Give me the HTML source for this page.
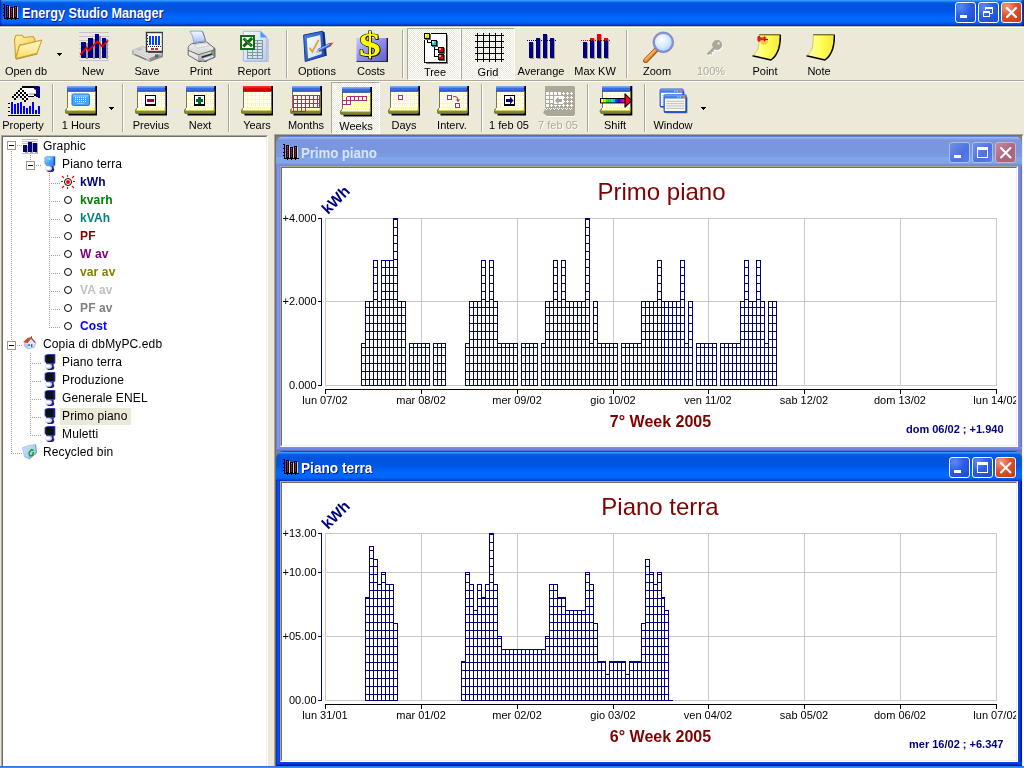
<!DOCTYPE html>
<html lang="it"><head><meta charset="utf-8"><title>Energy Studio Manager</title>
<style>
*{box-sizing:border-box;margin:0;padding:0}
html,body{width:1024px;height:768px;overflow:hidden}
body{position:relative;background:#ece9d8;font-family:"Liberation Sans",sans-serif;font-size:11px;color:#000}
div,svg{position:absolute}
#all{left:0;top:0;width:1024px;height:768px;overflow:hidden;opacity:.999}
#title{left:0;top:0;width:1024px;height:26px;background:linear-gradient(to bottom,#3d95ff 1.92%,#1a7cfc 5.77%,#0463ec 9.62%,#005ae4 13.46%,#0056e2 17.31%,#0054e0 21.15%,#0053e0 25.00%,#0053e0 28.85%,#0053e0 32.69%,#0054e2 36.54%,#0055e4 40.38%,#0057e8 44.23%,#0059ec 48.08%,#005cf0 51.92%,#005ff4 55.77%,#0062f8 59.62%,#0065fc 63.46%,#0068ff 67.31%,#0068ff 71.15%,#0068ff 75.00%,#0067fe 78.85%,#0065fa 82.69%,#0061f2 86.54%,#0058e4 90.38%,#0046d0 94.23%,#0030b8 98.08%)}
#title .edge{right:0;top:0;width:3px;height:26px;background:linear-gradient(to right,rgba(0,20,140,0),rgba(0,20,140,.9))}
#title .edgeL{left:0;top:0;width:2px;height:26px;background:linear-gradient(to left,rgba(0,20,160,0),rgba(0,20,160,.8))}
#title .cap{left:22px;top:5px;color:#fff;font-weight:bold;font-size:14px;line-height:17px;white-space:nowrap;text-shadow:1px 1px 0 #0a1883;transform:scaleX(.905);transform-origin:0 0}
.tbi{left:3px;top:4px;width:16px;height:16px}
.wb{width:21px;height:21px;top:2px;border:1px solid #fff;border-radius:3px;background:radial-gradient(circle at 25% 20%,#5a8cf0 0%,#2a5ee6 45%,#1c48c8 100%)}
.wb.close{background:radial-gradient(circle at 25% 20%,#f0a088 0%,#e0502c 45%,#c03a18 100%)}
.wb svg{left:0;top:0}
#wl{left:0;top:26px;width:1024px;height:2px;background:linear-gradient(#c4bfa8 50%,#fff 50%)}
#sepd{left:0;top:80px;width:1024px;height:1px;background:#aca899}
#sepl{left:0;top:81px;width:1024px;height:1px;background:#fff}
.ic{width:32px;height:32px}
.ic svg{left:0;top:0}
.lb{width:80px;text-align:center;line-height:13px;white-space:nowrap}
.lb.dis{color:#aca899;text-shadow:1px 1px 0 #fff}
.vsep{width:2px;height:48px;border-left:1px solid #aca899;border-right:1px solid #fff}
.pressed{border:1px solid;border-color:#aca899 #fff #fff #aca899;background:conic-gradient(#fff 25%,#ece9d8 0 50%,#fff 0 75%,#ece9d8 0) 0 0/2px 2px;box-sizing:content-box}
.arr{height:1px;background:#000}
#treebox{left:1px;top:135px;width:267px;height:640px;border:1px solid;border-color:#aca899 #fff #fff #aca899;background:#fff}
#treebox i{position:absolute;left:0;top:0;width:265px;height:638px;border:1px solid;border-color:#716f64 #f1efe2 #f1efe2 #716f64}
#tree{left:0;top:0;width:268px;height:768px;font-size:12px}
.tt{white-space:nowrap;line-height:18px;height:18px;font-size:12px;letter-spacing:.13px}
.tt.b{font-weight:bold}
.hlt{background:#ece9d8;width:71px;height:17px}
.ti{width:16px;height:16px}
.ti svg{left:0;top:0}
.pm{width:9px;height:9px;border:1px solid #9a9a8c;background:#fff}
.pm i{position:absolute;left:1px;top:3px;width:5px;height:1px;background:#000}
.hd{height:1px;background:repeating-linear-gradient(to right,#a0a096 0,#a0a096 1px,transparent 1px,transparent 2px)}
.vd{width:1px;background:repeating-linear-gradient(to bottom,#a0a096 0,#a0a096 1px,transparent 1px,transparent 2px)}
#mdi{left:274px;top:134px;width:750px;height:640px;background:#808080;border:1px solid;border-color:#aca899 #fff #fff #aca899}
#mdi i{position:absolute;left:0;top:0;width:748px;height:638px;border:1px solid;border-color:#716f64 #f1efe2 #f1efe2 #716f64}
#mdiB{left:0;top:766px;width:1024px;height:2px;background:linear-gradient(#3279dc 50%,#3c8ce8 50%);z-index:5}
.win{left:276px;width:746px;border-radius:8px 8px 0 0;overflow:hidden}
.win .tbar{left:0;top:0;width:746px;height:30px}
.win .wt{left:25px;top:9px;font-weight:bold;font-size:14px;line-height:17px;white-space:nowrap;transform-origin:0 0}
.win .wi{left:7px;top:8px;width:16px;height:16px}
.win .cb{width:21px;height:21px;top:6px;border-radius:3px;border:1px solid}
.win .cb svg{left:0;top:0}
.win .body{left:0;top:30px;width:746px}
.win .inner{left:4px;border:1px solid;border-color:#aca899 #fff #fff #aca899;background:#fff}
.win .inner i{position:absolute;left:0;top:0;border:1px solid;border-color:#716f64 #f1efe2 #f1efe2 #716f64}
svg.chart{overflow:hidden}
svg.chart text{font-family:"Liberation Sans",sans-serif}
.ax{font-size:11px;fill:#000}
.ttl{font-size:24px;fill:#800000}
.wk{font-size:16px;font-weight:bold;fill:#800000}
.inf{font-size:11px;font-weight:bold;fill:#000080}
.unit{font-size:15.4px;font-weight:bold;fill:#000080}
</style></head><body>
<div id="all">
<div id="title"><div class="edge"></div><div class="edgeL"></div><div class="tbi"><svg width="16" height="16" viewBox="0 0 16 16" ><g shape-rendering="crispEdges"><rect x="1" y="0" width="1" height="15" fill="#000"/><rect x="0" y="0" width="2" height="1" fill="#000"/><rect x="0" y="4" width="1" height="1" fill="#000"/><rect x="0" y="8" width="1" height="1" fill="#000"/><rect x="0" y="11" width="1" height="1" fill="#000"/><rect x="1" y="14" width="15" height="1" fill="#000"/><rect x="4" y="15" width="1" height="1" fill="#000"/><rect x="8" y="15" width="1" height="1" fill="#000"/><rect x="12" y="15" width="1" height="1" fill="#000"/><rect x="3" y="1" width="3" height="13" fill="#000"/><rect x="6" y="2" width="1" height="12" fill="#d4ccc0"/><rect x="4" y="2" width="1" height="11" fill="#90002c"/><rect x="4" y="2" width="1" height="1" fill="#f028f0"/><rect x="4" y="4" width="1" height="1" fill="#a01098"/><rect x="4" y="6" width="1" height="1" fill="#a01098"/><rect x="4" y="8" width="1" height="1" fill="#a01098"/><rect x="4" y="10" width="1" height="1" fill="#a01098"/><rect x="4" y="12" width="1" height="1" fill="#a01098"/><rect x="7" y="3" width="3" height="11" fill="#000"/><rect x="10" y="4" width="1" height="10" fill="#d4ccc0"/><rect x="8" y="4" width="1" height="9" fill="#90002c"/><rect x="8" y="4" width="1" height="1" fill="#f028f0"/><rect x="8" y="6" width="1" height="1" fill="#a01098"/><rect x="8" y="8" width="1" height="1" fill="#a01098"/><rect x="8" y="10" width="1" height="1" fill="#a01098"/><rect x="8" y="12" width="1" height="1" fill="#a01098"/><rect x="11" y="2" width="3" height="12" fill="#000"/><rect x="14" y="3" width="1" height="11" fill="#d4ccc0"/><rect x="12" y="3" width="1" height="10" fill="#90002c"/><rect x="12" y="3" width="1" height="1" fill="#f028f0"/><rect x="12" y="5" width="1" height="1" fill="#a01098"/><rect x="12" y="7" width="1" height="1" fill="#a01098"/><rect x="12" y="9" width="1" height="1" fill="#a01098"/><rect x="12" y="11" width="1" height="1" fill="#a01098"/></g></svg></div><div class="cap">Energy Studio Manager</div>
<div class="wb" style="left:955px"><svg width="19" height="19" viewBox="0 0 19 19" ><rect x="4" y="12" width="7" height="3" fill="#fff"/></svg></div>
<div class="wb" style="left:978px"><svg width="19" height="19" viewBox="0 0 19 19" ><g fill="none" stroke="#fff"><path d="M6.5 7V4.5h7v6H11" stroke-width="1"/><path d="M6 5h8" stroke-width="2"/><rect x="4.5" y="8.5" width="6" height="5"/><path d="M4 9h7" stroke-width="2"/></g></svg></div>
<div class="wb close" style="left:1001px"><svg width="19" height="19" viewBox="0 0 19 19" ><path d="M5 5l9 9M14 5l-9 9" stroke="#fff" stroke-width="2.2" stroke-linecap="round"/></svg></div>
</div>
<div id="wl"></div><div id="sepd"></div><div id="sepl"></div>
<div class="pressed" style="left:407px;top:28px;width:52px;height:50px"></div>
<div class="pressed" style="left:461px;top:28px;width:52px;height:50px"></div>
<div class="pressed" style="left:331px;top:82px;width:47px;height:50px"></div>
<div class="ic" style="left:12px;top:30px"><svg width="32" height="32" viewBox="0 0 32 32" ><defs><linearGradient id="fo1" x1="0" y1="0" x2="1" y2="1"><stop offset="0" stop-color="#fff2a8"/><stop offset="1" stop-color="#f4c84c"/></linearGradient><linearGradient id="fo2" x1="0" y1="0" x2="0" y2="1"><stop offset="0" stop-color="#fffbd0"/><stop offset="1" stop-color="#fbdc62"/></linearGradient></defs><path d="M2.5 9.5 3.6 6 4.6 5.2h5.4l1.8 2.3 9.4-1 1.7 3.1V12L7.6 15.4 3.6 28z" fill="url(#fo1)" stroke="#c8a030" stroke-width="1.1" stroke-linejoin="round"/><path d="M7.6 15.4 29.8 10.1 25 23.3 3.9 28.6z" fill="url(#fo2)" stroke="#cfa436" stroke-width="1.1" stroke-linejoin="round"/><path d="M4 29.3 25.4 24" stroke="#b8902c" stroke-width="1" fill="none"/></svg></div><div class="lb " style="left:-14px;top:65px">Open db</div>
<div class="arr" style="left:57px;top:53px;width:5px"></div><div class="arr" style="left:58px;top:54px;width:3px"></div><div class="arr" style="left:59px;top:55px;width:1px"></div>
<div class="ic" style="left:77px;top:30px"><svg width="32" height="32" viewBox="0 0 32 32" ><g shape-rendering="crispEdges"><path d="M2 2.5h30M2 6.5h30M2 10.5h30M2 14.5h30M2 18.5h30M2 22.5h30M2 26.5h30M2 30.5h30" stroke="#c4c4c8" fill="none"/><rect x="9" y="13" width="2" height="16" fill="#9a9a9a"/><rect x="16" y="9" width="2" height="20" fill="#9a9a9a"/><rect x="22" y="6" width="2" height="23" fill="#9a9a9a"/><rect x="29" y="9" width="2" height="20" fill="#9a9a9a"/><rect x="4" y="12" width="5" height="16" fill="#000080"/><rect x="11" y="8" width="5" height="20" fill="#000080"/><rect x="18" y="4" width="4" height="24" fill="#000080"/><rect x="25" y="8" width="4" height="20" fill="#000080"/></g><path d="M3.3 24.9 9.6 17.5 11.7 20.7 20.7 11.2 24.9 16.5 31 10.7" stroke="#e00000" stroke-width="1.8" fill="none" stroke-linejoin="round"/></svg></div><div class="lb " style="left:53px;top:65px">New</div>
<div class="ic" style="left:131px;top:30px"><svg width="32" height="32" viewBox="0 0 32 32" ><path d="M1 20.5 11 16.5 32 22.5 18.5 28.5z" fill="#dcdcdc" stroke="#a8a8a8" stroke-width=".6"/><path d="M1 20.5 18.5 28.5V32L1 24.5z" fill="#b4b4b4"/><path d="M18.5 28.5 32 22.5V27L18.5 32z" fill="#8c8c8c"/><path d="M3 22.3 17.5 28.6" stroke="#f4f4f4" stroke-width="1"/><path d="M4 24.6 15 29.6" stroke="#707070" stroke-width="1"/><path d="M5 19.8 9.5 18l3 1-4.5 1.9z" fill="#c0c0c0"/><rect x="24" y="24.5" width="3" height="3" fill="#606060"/><rect x="28.5" y="23" width="2" height="2.5" fill="#b8c0f0"/><rect x="15.5" y="2.5" width="16" height="19" fill="#fff" stroke="#383838" stroke-width="1.4"/><path d="M31.8 3v19.5H17" stroke="#505050" stroke-width="1" fill="none"/><g shape-rendering="crispEdges"><rect x="18" y="6" width="2" height="9" fill="#0048e0"/><rect x="21" y="6" width="2" height="9" fill="#0048e0"/><rect x="24" y="6" width="2" height="9" fill="#0048e0"/><rect x="27" y="6" width="2" height="9" fill="#0048e0"/><path d="M17 16.5h13" stroke="#202020" stroke-dasharray="1 1"/><path d="M16.5 5v11" stroke="#202020" stroke-dasharray="1 2"/><rect x="20" y="18" width="3" height="2" fill="#d03020"/><rect x="24" y="18" width="3" height="2" fill="#d03020"/></g></svg></div><div class="lb " style="left:107px;top:65px">Save</div>
<div class="ic" style="left:185px;top:30px"><svg width="32" height="32" viewBox="0 0 32 32" ><defs><linearGradient id="pp" x1="0" y1="0" x2="0" y2="1"><stop offset="0" stop-color="#f4f8ff"/><stop offset=".5" stop-color="#cfe0ff"/><stop offset="1" stop-color="#9cc4ff"/></linearGradient><linearGradient id="pb" x1="0" y1="0" x2="0" y2="1"><stop offset="0" stop-color="#f6f6f6"/><stop offset=".55" stop-color="#d8d8d8"/><stop offset="1" stop-color="#a8a8a8"/></linearGradient></defs><path d="M5 1.300C9 1 13 1 17.200 1.200 19 4.500 20 8 20.400 11L8.500 12.400C8.500 9 7.800 5.500 5 1.300z" fill="url(#pp)" stroke="#9098e0" stroke-width=".9"/><path d="M17.200 1.200C19 4.500 20 8 20.400 11" stroke="#707480" stroke-width=".9" fill="none"/><path d="M3.200 17.500C4 15 6 13.700 8 13.600L21.500 11.800 30 18.500v8.800L20.300 31.300H13.600L3.200 25.100z" fill="url(#pb)" stroke="#6c6c6c" stroke-width="1" stroke-linejoin="round"/><path d="M28.300 17.200 30 18.500v8.800l-1.700.7z" fill="#7a6e72"/><path d="M9 14.600 21 12.900 25 15.600 12.500 18.200z" fill="#ececec" stroke="#b0b0b0" stroke-width=".5"/><path d="M3.200 20.300 13.600 24.700 29.500 19.800" stroke="#606060" stroke-width=".9" fill="none"/><path d="M13.600 24.700v6" stroke="#a0a0a0" stroke-width=".6"/><path d="M4 21.500 13 25.400v4.800L4 25z" fill="#f4f4f4" opacity=".7"/><path d="M16.700 26.200 27.500 23v1.800L16.700 28.200z" fill="#303030"/><path d="M17.500 28.600 27.500 25.700 29.300 26.600 20 30.200z" fill="#fafafa" stroke="#8890c8" stroke-width=".5"/><rect x="26" y="21.100" width="2" height="2" fill="#40b840"/><path d="M13.500 31.700h2.200M19.500 31.700h2.200" stroke="#5a4a4a" stroke-width="1.200"/></svg></div><div class="lb " style="left:161px;top:65px">Print</div>
<div class="ic" style="left:238px;top:30px"><svg width="32" height="32" viewBox="0 0 32 32" ><defs><linearGradient id="rp" x1="0" y1="0" x2="1" y2="1"><stop offset="0" stop-color="#f8fbff"/><stop offset="1" stop-color="#b8ccf4"/></linearGradient></defs><path d="M30 8.500V31.800H7" stroke="#b4bcd8" stroke-width="1.200" fill="none"/><path d="M5.300 1.300H22.600l6.200 6V31H5.300z" fill="url(#rp)" stroke="#a4b8e8" stroke-width="1"/><path d="M22.600 1.300v6h6.200z" fill="#3c9cff" stroke="#88a8e8" stroke-width=".6"/><rect x="9.500" y="10.500" width="15" height="18" fill="#c8e8ff"/><g shape-rendering="crispEdges" stroke="#929292" fill="none"><path d="M9.500 10v19M14.500 10v19M19.500 10v19M24.500 10v19M9 10.500h16M9 13.500h16M9 16.500h16M9 19.500h16M9 22.500h16M9 25.500h16M9 28.500h16"/></g><rect x="3" y="6" width="13" height="13" fill="#fff" stroke="#107010" stroke-width="2"/><path d="M5.500 8.500 14 16.200M14.200 8.200 9 12.800 5.300 16.400" stroke="#0c640c" stroke-width="3" fill="none"/><path d="M6.500 9 13.500 15.800" stroke="#9cd09c" stroke-width=".6"/></svg></div><div class="lb " style="left:214px;top:65px">Report</div>
<div class="vsep" style="left:286px;top:30px"></div>
<div class="ic" style="left:302px;top:30px"><svg width="32" height="32" viewBox="0 0 32 32" ><defs><linearGradient id="ob" x1="0" y1="0" x2="1" y2="1"><stop offset="0" stop-color="#4c84ec"/><stop offset="1" stop-color="#1c44b4"/></linearGradient><linearGradient id="ow" x1="0" y1="0" x2="1" y2="1"><stop offset="0" stop-color="#fff"/><stop offset="1" stop-color="#c8dcfc"/></linearGradient></defs><path d="M1.6 5.1 20.6 1.2 23 25.7 3.2 31.5z" fill="url(#ob)" stroke="#183890" stroke-width="1"/><path d="M20.6 1.2 22.6 2.2 24.8 26 23 25.7z" fill="#102868"/><path d="M4.8 8.3 18.2 5.1 19.8 24.1 6 28.4z" fill="url(#ow)"/><path d="M7.6 17.8 10.3 21.7 16.6 9.9" stroke="#e8a020" stroke-width="1.8" fill="none"/><path d="M16.2 19.2 27.5 13.2 28.8 15.8 17.5 21.6z" fill="#3868d8" stroke="#1c3c98" stroke-width=".6"/><path d="M17 19.6 27.6 14" stroke="#c0d8ff" stroke-width=".9"/><path d="M27.5 13.2 31.6 12.4 28.8 15.8z" fill="#d83020"/><path d="M16.2 19.2 14.6 22.4 17.5 21.6z" fill="#f0e0c0" stroke="#806040" stroke-width=".4"/></svg></div><div class="lb " style="left:277px;top:65px">Options</div>
<div class="ic" style="left:356px;top:30px"><svg width="32" height="32" viewBox="0 0 32 32" ><defs><linearGradient id="cb" x1="0" y1="0" x2="1" y2="1"><stop offset="0" stop-color="#c8c8ff"/><stop offset=".5" stop-color="#8c8cf0"/><stop offset="1" stop-color="#6060c8"/></linearGradient></defs><rect x=".5" y="8" width="30.5" height="23.3" fill="url(#cb)"/><path d="M31.3 8v23.8H.5" stroke="#000" stroke-width="1.2" fill="none"/><g transform="translate(13.700 0) scale(1.300 1)"><text x=".8" y="27.400" text-anchor="middle" font-family="Liberation Serif,serif" font-weight="bold" font-size="34" fill="#202020">$</text><text x="0" y="26.400" text-anchor="middle" font-family="Liberation Serif,serif" font-weight="bold" font-size="34" fill="#ffff00" stroke="#000" stroke-width="1" paint-order="stroke">$</text></g></svg></div><div class="lb " style="left:331px;top:65px">Costs</div>
<div class="vsep" style="left:402px;top:30px"></div>
<div class="ic" style="left:419px;top:31px"><svg width="32" height="32" viewBox="0 0 32 32" style="overflow:visible"><g shape-rendering="crispEdges"><rect x="6" y="3" width="21" height="28" fill="#fff"/><rect x="5" y="9" width="1" height="23" fill="#000"/><rect x="12" y="2" width="16" height="1" fill="#000"/><rect x="27" y="2" width="1" height="30" fill="#000"/><rect x="5" y="31" width="23" height="1" fill="#000"/><rect x="28" y="4" width="1" height="29" fill="#808080"/><rect x="7" y="32" width="22" height="1" fill="#808080"/><rect x="8" y="8" width="1" height="4" fill="#000"/><rect x="8" y="11" width="4" height="1" fill="#000"/><rect x="15" y="15" width="1" height="11" fill="#000"/><rect x="15" y="18" width="4" height="1" fill="#000"/><rect x="15" y="25" width="4" height="1" fill="#000"/><rect x="5" y="2" width="6" height="6" fill="#000"/><rect x="6" y="3" width="4" height="4" fill="#e8e800"/><rect x="6" y="3" width="2" height="2" fill="#ffff90"/><rect x="11" y="3" width="1" height="6" fill="#606060"/><rect x="6" y="8" width="6" height="1" fill="#606060"/><rect x="12" y="9" width="6" height="6" fill="#000"/><rect x="13" y="10" width="4" height="4" fill="#00d0e0"/><rect x="13" y="10" width="2" height="2" fill="#b0ffff"/><rect x="18" y="10" width="1" height="6" fill="#606060"/><rect x="13" y="15" width="6" height="1" fill="#606060"/><rect x="19" y="16" width="6" height="6" fill="#000"/><rect x="20" y="17" width="4" height="4" fill="#e00000"/><rect x="20" y="17" width="2" height="2" fill="#ff9090"/><rect x="25" y="17" width="1" height="6" fill="#606060"/><rect x="20" y="22" width="6" height="1" fill="#606060"/><rect x="19" y="23" width="6" height="6" fill="#000"/><rect x="20" y="24" width="4" height="4" fill="#e00000"/><rect x="20" y="24" width="2" height="2" fill="#ff9090"/><rect x="25" y="24" width="1" height="6" fill="#606060"/><rect x="20" y="29" width="6" height="1" fill="#606060"/></g></svg></div><div class="lb " style="left:395px;top:66px">Tree</div>
<div class="ic" style="left:473px;top:31px"><svg width="32" height="32" viewBox="0 0 32 32" ><g shape-rendering="crispEdges" fill="#000"><rect x="4" y="2" width="1" height="29"/><rect x="10" y="2" width="1" height="29"/><rect x="16" y="2" width="1" height="29"/><rect x="22" y="2" width="1" height="29"/><rect x="28" y="2" width="1" height="29"/><rect x="2" y="4" width="29" height="1"/><rect x="2" y="10" width="29" height="1"/><rect x="2" y="16" width="29" height="1"/><rect x="2" y="22" width="29" height="1"/><rect x="2" y="28" width="29" height="1"/></g></svg></div><div class="lb " style="left:448px;top:66px">Grid</div>
<div class="ic" style="left:525px;top:30px"><svg width="32" height="32" viewBox="0 0 32 32" ><g shape-rendering="crispEdges"><rect x="5" y="13" width="4" height="16" fill="#a09c88"/><rect x="12" y="9" width="4" height="20" fill="#a09c88"/><rect x="19" y="5" width="4" height="24" fill="#a09c88"/><rect x="26" y="9" width="4" height="20" fill="#a09c88"/><rect x="4" y="12" width="4" height="16" fill="#000080"/><rect x="11" y="8" width="4" height="20" fill="#000080"/><rect x="18" y="4" width="4" height="24" fill="#000080"/><rect x="25" y="8" width="4" height="20" fill="#000080"/><path d="M2 10.5h30" stroke="#000080" stroke-dasharray="1 1" fill="none"/></g></svg></div><div class="lb " style="left:501px;top:65px">Averange</div>
<div class="ic" style="left:579px;top:30px"><svg width="32" height="32" viewBox="0 0 32 32" ><g shape-rendering="crispEdges"><rect x="5" y="13" width="4" height="16" fill="#a09c88"/><rect x="12" y="9" width="4" height="20" fill="#a09c88"/><rect x="19" y="5" width="4" height="24" fill="#a09c88"/><rect x="26" y="9" width="4" height="20" fill="#a09c88"/><rect x="4" y="12" width="4" height="16" fill="#000080"/><rect x="11" y="8" width="4" height="20" fill="#000080"/><rect x="11" y="8" width="4" height="2" fill="#f00000"/><rect x="18" y="4" width="4" height="24" fill="#000080"/><rect x="18" y="4" width="4" height="6" fill="#f00000"/><rect x="25" y="8" width="4" height="20" fill="#000080"/><rect x="25" y="8" width="4" height="2" fill="#f00000"/><path d="M2 10.5h30" stroke="#f00000" stroke-dasharray="1 1" fill="none"/></g></svg></div><div class="lb " style="left:555px;top:65px">Max KW</div>
<div class="vsep" style="left:626px;top:30px"></div>
<div class="ic" style="left:642px;top:31px"><svg width="32" height="32" viewBox="0 0 32 32" ><defs><radialGradient id="zl" cx=".4" cy=".35" r=".7"><stop offset="0" stop-color="#fff"/><stop offset=".6" stop-color="#d4e8ff"/><stop offset="1" stop-color="#a8ccff"/></radialGradient></defs><path d="M14.5 18.5 3.6 29.8" stroke="#a05818" stroke-width="5" stroke-linecap="round"/><path d="M14.3 18.3 3.6 29.4" stroke="#f09838" stroke-width="3" stroke-linecap="round"/><path d="M13 18.6 3.4 28.4" stroke="#f8c888" stroke-width="1" stroke-linecap="round"/><circle cx="21.3" cy="11.3" r="9.4" fill="url(#zl)" stroke="#8890d8" stroke-width="2"/><circle cx="21.3" cy="11.3" r="10.4" fill="none" stroke="#6068b0" stroke-width=".5"/></svg></div><div class="lb " style="left:617px;top:65px">Zoom</div>
<div class="ic" style="left:695px;top:30px"><svg width="32" height="32" viewBox="0 0 32 32" ><g transform="translate(1 1)" fill="#fff" stroke="#fff"><circle cx="22.2" cy="14.9" r="4.6"/><path d="M19.4 17.8 12.8 24.4" stroke-width="2.6" fill="none"/><path d="M14.8 22.2l2 2M16.8 20.2l1.6 1.6" stroke-width="1.4"/></g><g fill="#aca899" stroke="#aca899"><circle cx="22.2" cy="14.9" r="4.6"/><path d="M19.4 17.8 12.8 24.4" stroke-width="2.6" fill="none"/><path d="M14.8 22.2l2 2M16.8 20.2l1.6 1.6" stroke-width="1.4"/></g><circle cx="23.6" cy="13.4" r="1.2" fill="#ece9d8"/></svg></div><div class="lb dis" style="left:671px;top:65px">100%</div>
<div class="ic" style="left:749px;top:30px"><svg width="32" height="32" viewBox="0 0 32 32" ><defs><linearGradient id="ngb" x1="0" y1="0" x2="1" y2="0"><stop offset="0" stop-color="#ffffc8"/><stop offset=".5" stop-color="#ffff58"/><stop offset="1" stop-color="#f4e838"/></linearGradient></defs><path d="M10.2 4.8H31.3C31.5 9 31 14 29.8 18.5 28.2 23.5 25.5 27.5 22 30L3.5 25.8C7 23.5 9 20 9.6 16 10.2 12 10.4 8.5 10.2 4.8z" fill="url(#ngb)"/><path d="M31.3 4.8C31.5 9 31 14 29.8 18.5 28.2 23.5 25.5 27.5 22 30L3.5 25.8" stroke="#000" stroke-width="1.5" fill="none" stroke-linejoin="round"/><path d="M10.2 4.8H31.3" stroke="#504000" stroke-width="1" fill="none"/><path d="M10.2 5C10.4 8.5 10.2 12 9.6 16 9 20 7 23.5 3.5 25.8" stroke="#c8b838" stroke-width=".7" fill="none"/><circle cx="15" cy="10.5" r="4.2" fill="#f0a030" opacity=".55"/><path d="M12 9 19 9.6" stroke="#303030" stroke-width="1"/><ellipse cx="10" cy="8.8" rx="1.7" ry="3" fill="#e01818"/><path d="M10.5 7.6h4l1.2-1.4v5.4L14.5 10.2h-4z" fill="#e82020"/><ellipse cx="15.8" cy="8.9" rx=".9" ry="2.7" fill="#c01010"/></svg></div><div class="lb " style="left:725px;top:65px">Point</div>
<div class="ic" style="left:803px;top:30px"><svg width="32" height="32" viewBox="0 0 32 32" ><defs><linearGradient id="nga" x1="0" y1="0" x2="1" y2="0"><stop offset="0" stop-color="#ffffc8"/><stop offset=".5" stop-color="#ffff58"/><stop offset="1" stop-color="#f4e838"/></linearGradient></defs><path d="M10.2 4.8H31.3C31.5 9 31 14 29.8 18.5 28.2 23.5 25.5 27.5 22 30L3.5 25.8C7 23.5 9 20 9.6 16 10.2 12 10.4 8.5 10.2 4.8z" fill="url(#nga)"/><path d="M31.3 4.8C31.5 9 31 14 29.8 18.5 28.2 23.5 25.5 27.5 22 30L3.5 25.8" stroke="#000" stroke-width="1.5" fill="none" stroke-linejoin="round"/><path d="M10.2 4.8H31.3" stroke="#504000" stroke-width="1" fill="none"/><path d="M10.2 5C10.4 8.5 10.2 12 9.6 16 9 20 7 23.5 3.5 25.8" stroke="#c8b838" stroke-width=".7" fill="none"/></svg></div><div class="lb " style="left:779px;top:65px">Note</div>
<div class="ic" style="left:8px;top:85px"><svg width="32" height="32" viewBox="0 0 32 32" ><g shape-rendering="crispEdges"><rect x="3" y="17" width="2" height="12" fill="#0000ff"/><rect x="6" y="19" width="2" height="10" fill="#0000ff"/><rect x="9" y="18" width="2" height="11" fill="#0000ff"/><rect x="12" y="17" width="2" height="12" fill="#0000ff"/><rect x="15" y="21" width="2" height="8" fill="#0000ff"/><rect x="18" y="23" width="2" height="6" fill="#0000ff"/><rect x="21" y="21" width="2" height="8" fill="#0000ff"/><rect x="24" y="17" width="2" height="12" fill="#0000ff"/><rect x="27" y="25" width="2" height="4" fill="#0000ff"/><rect x="30" y="21" width="2" height="8" fill="#0000ff"/><rect x="0" y="30" width="32" height="1" fill="#000"/><rect x="0" y="18" width="2" height="1" fill="#000"/><rect x="0" y="22" width="2" height="1" fill="#000"/><rect x="0" y="26" width="2" height="1" fill="#000"/><rect x="15" y="3" width="12" height="8" fill="#fff"/><rect x="21" y="8" width="6" height="2" fill="#c4c4c4"/><rect x="14" y="1" width="13" height="2" fill="#000"/><rect x="20" y="11" width="6" height="1" fill="#000"/><rect x="26" y="9" width="2" height="2" fill="#000"/></g><path d="M26 1h5l1 1v11h-2v-1h-2V5l-2-1z" fill="#000080"/><g shape-rendering="crispEdges"><rect x="12" y="5" width="2" height="2" fill="#fff"/><rect x="10" y="7" width="2" height="2" fill="#fff"/><rect x="14" y="7" width="2" height="2" fill="#fff"/><rect x="8" y="9" width="2" height="2" fill="#fff"/><rect x="12" y="9" width="2" height="2" fill="#fff"/><rect x="16" y="9" width="2" height="2" fill="#fff"/><rect x="6" y="11" width="2" height="2" fill="#fff"/><rect x="14" y="11" width="2" height="2" fill="#fff"/><rect x="18" y="11" width="2" height="2" fill="#fff"/><rect x="16" y="13" width="2" height="2" fill="#fff"/><rect x="12" y="3" width="2" height="2" fill="#000"/><rect x="10" y="5" width="2" height="2" fill="#000"/><rect x="14" y="5" width="2" height="2" fill="#000"/><rect x="8" y="7" width="2" height="2" fill="#000"/><rect x="12" y="7" width="2" height="2" fill="#000"/><rect x="16" y="7" width="2" height="2" fill="#000"/><rect x="6" y="9" width="2" height="2" fill="#000"/><rect x="10" y="9" width="2" height="2" fill="#000"/><rect x="14" y="9" width="2" height="2" fill="#000"/><rect x="18" y="9" width="2" height="2" fill="#000"/><rect x="4" y="11" width="2" height="2" fill="#000"/><rect x="8" y="11" width="2" height="2" fill="#000"/><rect x="12" y="11" width="2" height="2" fill="#000"/><rect x="16" y="11" width="2" height="2" fill="#000"/><rect x="6" y="13" width="2" height="2" fill="#000"/><rect x="14" y="13" width="2" height="2" fill="#000"/><rect x="18" y="13" width="2" height="2" fill="#000"/><rect x="16" y="15" width="2" height="2" fill="#000"/></g></svg></div><div class="lb " style="left:-17px;top:119px">Property</div>
<div class="vsep" style="left:52px;top:84px"></div>
<div class="ic" style="left:65px;top:85px"><svg width="32" height="32" viewBox="0 0 32 32" ><path d="M30 1h2.300v29.500H3.500v-3H30z" fill="#000"/><path d="M1.500 23.500-.2 26 1 28.500H30l.6-1.500V22z" fill="#a8a850" stroke="#707020" stroke-width=".7"/><path d="M0 26.300H30.200M.6 27.600H30" stroke="#585818" stroke-width=".5"/><path d="M2 6h28.500v17.500l.3 2H.8l1.200-2.500z" fill="#ffff98"/><path d="M2.500 6v17.200L1 25.500" stroke="#7c7c34" stroke-width="1" fill="none"/><path d="M30.300 6v20" stroke="#6c6c24" stroke-width=".8" fill="none"/><g shape-rendering="crispEdges" fill="#fff"><rect x="3" y="7" width="3" height="3"/><rect x="7" y="7" width="3" height="3"/><rect x="11" y="7" width="3" height="3"/><rect x="15" y="7" width="3" height="3"/><rect x="19" y="7" width="3" height="3"/><rect x="23" y="7" width="3" height="3"/><rect x="27" y="7" width="3" height="3"/><rect x="3" y="11" width="3" height="3"/><rect x="7" y="11" width="3" height="3"/><rect x="11" y="11" width="3" height="3"/><rect x="15" y="11" width="3" height="3"/><rect x="19" y="11" width="3" height="3"/><rect x="23" y="11" width="3" height="3"/><rect x="27" y="11" width="3" height="3"/><rect x="3" y="15" width="3" height="3"/><rect x="7" y="15" width="3" height="3"/><rect x="11" y="15" width="3" height="3"/><rect x="15" y="15" width="3" height="3"/><rect x="19" y="15" width="3" height="3"/><rect x="23" y="15" width="3" height="3"/><rect x="27" y="15" width="3" height="3"/><rect x="3" y="19" width="3" height="3"/><rect x="7" y="19" width="3" height="3"/><rect x="11" y="19" width="3" height="3"/><rect x="15" y="19" width="3" height="3"/><rect x="19" y="19" width="3" height="3"/><rect x="23" y="19" width="3" height="3"/><rect x="27" y="19" width="3" height="3"/><rect x="2" y="23" width="3" height="2"/><rect x="6" y="23" width="3" height="2"/><rect x="10" y="23" width="3" height="2"/><rect x="14" y="23" width="3" height="2"/><rect x="18" y="23" width="3" height="2"/><rect x="22" y="23" width="3" height="2"/><rect x="26" y="23" width="3" height="2"/></g><g shape-rendering="crispEdges" fill="#ffff60"><rect x="24" y="8" width="1" height="1"/><rect x="28" y="8" width="1" height="1"/><rect x="20" y="12" width="1" height="1"/><rect x="24" y="12" width="1" height="1"/><rect x="28" y="12" width="1" height="1"/><rect x="16" y="16" width="1" height="1"/><rect x="20" y="16" width="1" height="1"/><rect x="24" y="16" width="1" height="1"/><rect x="28" y="16" width="1" height="1"/><rect x="12" y="20" width="1" height="1"/><rect x="16" y="20" width="1" height="1"/><rect x="20" y="20" width="1" height="1"/><rect x="24" y="20" width="1" height="1"/><rect x="28" y="20" width="1" height="1"/><rect x="7" y="23" width="1" height="1"/><rect x="11" y="23" width="1" height="1"/><rect x="15" y="23" width="1" height="1"/><rect x="19" y="23" width="1" height="1"/><rect x="23" y="23" width="1" height="1"/><rect x="27" y="23" width="1" height="1"/></g><rect x="2" y="1" width="28.200" height="5.600" fill="#3c6cdc"/><rect x="2" y="1" width="28.200" height="1.600" fill="#78a8f8"/><rect x="2" y="5.600" width="28.200" height="1" fill="#2448b0"/><rect x="7" y="9" width="17.500" height="11.500" rx="1.500" fill="#48a0ff" stroke="#2878e0" stroke-width="1"/><rect x="8" y="9.800" width="15.500" height="2" fill="#78c0ff"/><g shape-rendering="crispEdges" fill="#e8f4ff"><rect x="10" y="12" width="1" height="1"/><rect x="12" y="12" width="1" height="1"/><rect x="14" y="12" width="1" height="1"/><rect x="16" y="12" width="1" height="1"/><rect x="18" y="12" width="1" height="1"/><rect x="20" y="12" width="1" height="1"/><rect x="10" y="14" width="1" height="1"/><rect x="12" y="14" width="1" height="1"/><rect x="14" y="14" width="1" height="1"/><rect x="16" y="14" width="1" height="1"/><rect x="18" y="14" width="1" height="1"/><rect x="20" y="14" width="1" height="1"/><rect x="10" y="16" width="1" height="1"/><rect x="12" y="16" width="1" height="1"/><rect x="14" y="16" width="1" height="1"/><rect x="16" y="16" width="1" height="1"/><rect x="18" y="16" width="1" height="1"/><rect x="20" y="16" width="1" height="1"/><rect x="12" y="18" width="7" height="1" fill="#c8c090"/></g></svg></div><div class="lb " style="left:41px;top:119px">1 Hours</div>
<div class="arr" style="left:109px;top:107px;width:5px"></div><div class="arr" style="left:110px;top:108px;width:3px"></div><div class="arr" style="left:111px;top:109px;width:1px"></div>
<div class="vsep" style="left:122px;top:84px"></div>
<div class="ic" style="left:135px;top:85px"><svg width="32" height="32" viewBox="0 0 32 32" ><path d="M30 1h2.300v29.500H3.500v-3H30z" fill="#000"/><path d="M1.500 23.500-.2 26 1 28.500H30l.6-1.500V22z" fill="#a8a850" stroke="#707020" stroke-width=".7"/><path d="M0 26.300H30.200M.6 27.600H30" stroke="#585818" stroke-width=".5"/><path d="M2 6h28.500v17.500l.3 2H.8l1.200-2.500z" fill="#ffff98"/><path d="M2.500 6v17.200L1 25.500" stroke="#7c7c34" stroke-width="1" fill="none"/><path d="M30.300 6v20" stroke="#6c6c24" stroke-width=".8" fill="none"/><g shape-rendering="crispEdges" fill="#fff"><rect x="3" y="7" width="3" height="3"/><rect x="7" y="7" width="3" height="3"/><rect x="11" y="7" width="3" height="3"/><rect x="15" y="7" width="3" height="3"/><rect x="19" y="7" width="3" height="3"/><rect x="23" y="7" width="3" height="3"/><rect x="27" y="7" width="3" height="3"/><rect x="3" y="11" width="3" height="3"/><rect x="7" y="11" width="3" height="3"/><rect x="11" y="11" width="3" height="3"/><rect x="15" y="11" width="3" height="3"/><rect x="19" y="11" width="3" height="3"/><rect x="23" y="11" width="3" height="3"/><rect x="27" y="11" width="3" height="3"/><rect x="3" y="15" width="3" height="3"/><rect x="7" y="15" width="3" height="3"/><rect x="11" y="15" width="3" height="3"/><rect x="15" y="15" width="3" height="3"/><rect x="19" y="15" width="3" height="3"/><rect x="23" y="15" width="3" height="3"/><rect x="27" y="15" width="3" height="3"/><rect x="3" y="19" width="3" height="3"/><rect x="7" y="19" width="3" height="3"/><rect x="11" y="19" width="3" height="3"/><rect x="15" y="19" width="3" height="3"/><rect x="19" y="19" width="3" height="3"/><rect x="23" y="19" width="3" height="3"/><rect x="27" y="19" width="3" height="3"/><rect x="2" y="23" width="3" height="2"/><rect x="6" y="23" width="3" height="2"/><rect x="10" y="23" width="3" height="2"/><rect x="14" y="23" width="3" height="2"/><rect x="18" y="23" width="3" height="2"/><rect x="22" y="23" width="3" height="2"/><rect x="26" y="23" width="3" height="2"/></g><g shape-rendering="crispEdges" fill="#ffff60"><rect x="24" y="8" width="1" height="1"/><rect x="28" y="8" width="1" height="1"/><rect x="20" y="12" width="1" height="1"/><rect x="24" y="12" width="1" height="1"/><rect x="28" y="12" width="1" height="1"/><rect x="16" y="16" width="1" height="1"/><rect x="20" y="16" width="1" height="1"/><rect x="24" y="16" width="1" height="1"/><rect x="28" y="16" width="1" height="1"/><rect x="12" y="20" width="1" height="1"/><rect x="16" y="20" width="1" height="1"/><rect x="20" y="20" width="1" height="1"/><rect x="24" y="20" width="1" height="1"/><rect x="28" y="20" width="1" height="1"/><rect x="7" y="23" width="1" height="1"/><rect x="11" y="23" width="1" height="1"/><rect x="15" y="23" width="1" height="1"/><rect x="19" y="23" width="1" height="1"/><rect x="23" y="23" width="1" height="1"/><rect x="27" y="23" width="1" height="1"/></g><rect x="2" y="1" width="28.200" height="5.600" fill="#3c6cdc"/><rect x="2" y="1" width="28.200" height="1.600" fill="#78a8f8"/><rect x="2" y="5.600" width="28.200" height="1" fill="#2448b0"/><g shape-rendering="crispEdges"><rect x="10" y="10" width="11" height="11" fill="#000"/><rect x="11" y="11" width="9" height="8" fill="#fff"/><rect x="12" y="14" width="7" height="3" fill="#a00040"/></g></svg></div><div class="lb " style="left:111px;top:119px">Previus</div>
<div class="ic" style="left:184px;top:85px"><svg width="32" height="32" viewBox="0 0 32 32" ><path d="M30 1h2.300v29.500H3.500v-3H30z" fill="#000"/><path d="M1.500 23.500-.2 26 1 28.500H30l.6-1.500V22z" fill="#a8a850" stroke="#707020" stroke-width=".7"/><path d="M0 26.300H30.200M.6 27.600H30" stroke="#585818" stroke-width=".5"/><path d="M2 6h28.500v17.500l.3 2H.8l1.200-2.500z" fill="#ffff98"/><path d="M2.500 6v17.200L1 25.500" stroke="#7c7c34" stroke-width="1" fill="none"/><path d="M30.300 6v20" stroke="#6c6c24" stroke-width=".8" fill="none"/><g shape-rendering="crispEdges" fill="#fff"><rect x="3" y="7" width="3" height="3"/><rect x="7" y="7" width="3" height="3"/><rect x="11" y="7" width="3" height="3"/><rect x="15" y="7" width="3" height="3"/><rect x="19" y="7" width="3" height="3"/><rect x="23" y="7" width="3" height="3"/><rect x="27" y="7" width="3" height="3"/><rect x="3" y="11" width="3" height="3"/><rect x="7" y="11" width="3" height="3"/><rect x="11" y="11" width="3" height="3"/><rect x="15" y="11" width="3" height="3"/><rect x="19" y="11" width="3" height="3"/><rect x="23" y="11" width="3" height="3"/><rect x="27" y="11" width="3" height="3"/><rect x="3" y="15" width="3" height="3"/><rect x="7" y="15" width="3" height="3"/><rect x="11" y="15" width="3" height="3"/><rect x="15" y="15" width="3" height="3"/><rect x="19" y="15" width="3" height="3"/><rect x="23" y="15" width="3" height="3"/><rect x="27" y="15" width="3" height="3"/><rect x="3" y="19" width="3" height="3"/><rect x="7" y="19" width="3" height="3"/><rect x="11" y="19" width="3" height="3"/><rect x="15" y="19" width="3" height="3"/><rect x="19" y="19" width="3" height="3"/><rect x="23" y="19" width="3" height="3"/><rect x="27" y="19" width="3" height="3"/><rect x="2" y="23" width="3" height="2"/><rect x="6" y="23" width="3" height="2"/><rect x="10" y="23" width="3" height="2"/><rect x="14" y="23" width="3" height="2"/><rect x="18" y="23" width="3" height="2"/><rect x="22" y="23" width="3" height="2"/><rect x="26" y="23" width="3" height="2"/></g><g shape-rendering="crispEdges" fill="#ffff60"><rect x="24" y="8" width="1" height="1"/><rect x="28" y="8" width="1" height="1"/><rect x="20" y="12" width="1" height="1"/><rect x="24" y="12" width="1" height="1"/><rect x="28" y="12" width="1" height="1"/><rect x="16" y="16" width="1" height="1"/><rect x="20" y="16" width="1" height="1"/><rect x="24" y="16" width="1" height="1"/><rect x="28" y="16" width="1" height="1"/><rect x="12" y="20" width="1" height="1"/><rect x="16" y="20" width="1" height="1"/><rect x="20" y="20" width="1" height="1"/><rect x="24" y="20" width="1" height="1"/><rect x="28" y="20" width="1" height="1"/><rect x="7" y="23" width="1" height="1"/><rect x="11" y="23" width="1" height="1"/><rect x="15" y="23" width="1" height="1"/><rect x="19" y="23" width="1" height="1"/><rect x="23" y="23" width="1" height="1"/><rect x="27" y="23" width="1" height="1"/></g><rect x="2" y="1" width="28.200" height="5.600" fill="#3c6cdc"/><rect x="2" y="1" width="28.200" height="1.600" fill="#78a8f8"/><rect x="2" y="5.600" width="28.200" height="1" fill="#2448b0"/><g shape-rendering="crispEdges"><rect x="10" y="10" width="11" height="11" fill="#000"/><rect x="11" y="11" width="9" height="8" fill="#fff"/><rect x="12" y="14" width="7" height="3" fill="#006838"/><rect x="14" y="12" width="3" height="7" fill="#006838"/></g></svg></div><div class="lb " style="left:160px;top:119px">Next</div>
<div class="vsep" style="left:228px;top:84px"></div>
<div class="ic" style="left:241px;top:85px"><svg width="32" height="32" viewBox="0 0 32 32" ><path d="M30 1h2.300v29.500H3.500v-3H30z" fill="#000"/><path d="M1.500 23.500-.2 26 1 28.500H30l.6-1.500V22z" fill="#a8a850" stroke="#707020" stroke-width=".7"/><path d="M0 26.300H30.200M.6 27.600H30" stroke="#585818" stroke-width=".5"/><path d="M2 6h28.500v17.500l.3 2H.8l1.200-2.500z" fill="#ffff98"/><path d="M2.500 6v17.200L1 25.500" stroke="#7c7c34" stroke-width="1" fill="none"/><path d="M30.300 6v20" stroke="#6c6c24" stroke-width=".8" fill="none"/><g shape-rendering="crispEdges" fill="#fff"><rect x="3" y="7" width="3" height="3"/><rect x="7" y="7" width="3" height="3"/><rect x="11" y="7" width="3" height="3"/><rect x="15" y="7" width="3" height="3"/><rect x="19" y="7" width="3" height="3"/><rect x="23" y="7" width="3" height="3"/><rect x="27" y="7" width="3" height="3"/><rect x="3" y="11" width="3" height="3"/><rect x="7" y="11" width="3" height="3"/><rect x="11" y="11" width="3" height="3"/><rect x="15" y="11" width="3" height="3"/><rect x="19" y="11" width="3" height="3"/><rect x="23" y="11" width="3" height="3"/><rect x="27" y="11" width="3" height="3"/><rect x="3" y="15" width="3" height="3"/><rect x="7" y="15" width="3" height="3"/><rect x="11" y="15" width="3" height="3"/><rect x="15" y="15" width="3" height="3"/><rect x="19" y="15" width="3" height="3"/><rect x="23" y="15" width="3" height="3"/><rect x="27" y="15" width="3" height="3"/><rect x="3" y="19" width="3" height="3"/><rect x="7" y="19" width="3" height="3"/><rect x="11" y="19" width="3" height="3"/><rect x="15" y="19" width="3" height="3"/><rect x="19" y="19" width="3" height="3"/><rect x="23" y="19" width="3" height="3"/><rect x="27" y="19" width="3" height="3"/><rect x="2" y="23" width="3" height="2"/><rect x="6" y="23" width="3" height="2"/><rect x="10" y="23" width="3" height="2"/><rect x="14" y="23" width="3" height="2"/><rect x="18" y="23" width="3" height="2"/><rect x="22" y="23" width="3" height="2"/><rect x="26" y="23" width="3" height="2"/></g><g shape-rendering="crispEdges" fill="#ffff60"><rect x="24" y="8" width="1" height="1"/><rect x="28" y="8" width="1" height="1"/><rect x="20" y="12" width="1" height="1"/><rect x="24" y="12" width="1" height="1"/><rect x="28" y="12" width="1" height="1"/><rect x="16" y="16" width="1" height="1"/><rect x="20" y="16" width="1" height="1"/><rect x="24" y="16" width="1" height="1"/><rect x="28" y="16" width="1" height="1"/><rect x="12" y="20" width="1" height="1"/><rect x="16" y="20" width="1" height="1"/><rect x="20" y="20" width="1" height="1"/><rect x="24" y="20" width="1" height="1"/><rect x="28" y="20" width="1" height="1"/><rect x="7" y="23" width="1" height="1"/><rect x="11" y="23" width="1" height="1"/><rect x="15" y="23" width="1" height="1"/><rect x="19" y="23" width="1" height="1"/><rect x="23" y="23" width="1" height="1"/><rect x="27" y="23" width="1" height="1"/></g><rect x="2" y="1" width="28.200" height="5.600" fill="#e00000"/><rect x="2" y="1" width="28.200" height="1.600" fill="#ff3030"/><rect x="2" y="5.600" width="28.200" height="1" fill="#b00000"/></svg></div><div class="lb " style="left:217px;top:119px">Years</div>
<div class="ic" style="left:290px;top:85px"><svg width="32" height="32" viewBox="0 0 32 32" ><path d="M30 1h2.300v29.500H3.500v-3H30z" fill="#000"/><path d="M1.500 23.500-.2 26 1 28.500H30l.6-1.500V22z" fill="#a8a850" stroke="#707020" stroke-width=".7"/><path d="M0 26.300H30.200M.6 27.600H30" stroke="#585818" stroke-width=".5"/><path d="M2 6h28.500v17.500l.3 2H.8l1.200-2.500z" fill="#ffff98"/><path d="M2.500 6v17.200L1 25.500" stroke="#7c7c34" stroke-width="1" fill="none"/><path d="M30.300 6v20" stroke="#6c6c24" stroke-width=".8" fill="none"/><g shape-rendering="crispEdges" fill="#fff"><rect x="3" y="7" width="3" height="3"/><rect x="7" y="7" width="3" height="3"/><rect x="11" y="7" width="3" height="3"/><rect x="15" y="7" width="3" height="3"/><rect x="19" y="7" width="3" height="3"/><rect x="23" y="7" width="3" height="3"/><rect x="27" y="7" width="3" height="3"/><rect x="3" y="11" width="3" height="3"/><rect x="7" y="11" width="3" height="3"/><rect x="11" y="11" width="3" height="3"/><rect x="15" y="11" width="3" height="3"/><rect x="19" y="11" width="3" height="3"/><rect x="23" y="11" width="3" height="3"/><rect x="27" y="11" width="3" height="3"/><rect x="3" y="15" width="3" height="3"/><rect x="7" y="15" width="3" height="3"/><rect x="11" y="15" width="3" height="3"/><rect x="15" y="15" width="3" height="3"/><rect x="19" y="15" width="3" height="3"/><rect x="23" y="15" width="3" height="3"/><rect x="27" y="15" width="3" height="3"/><rect x="3" y="19" width="3" height="3"/><rect x="7" y="19" width="3" height="3"/><rect x="11" y="19" width="3" height="3"/><rect x="15" y="19" width="3" height="3"/><rect x="19" y="19" width="3" height="3"/><rect x="23" y="19" width="3" height="3"/><rect x="27" y="19" width="3" height="3"/><rect x="2" y="23" width="3" height="2"/><rect x="6" y="23" width="3" height="2"/><rect x="10" y="23" width="3" height="2"/><rect x="14" y="23" width="3" height="2"/><rect x="18" y="23" width="3" height="2"/><rect x="22" y="23" width="3" height="2"/><rect x="26" y="23" width="3" height="2"/></g><g shape-rendering="crispEdges" fill="#ffff60"><rect x="24" y="8" width="1" height="1"/><rect x="28" y="8" width="1" height="1"/><rect x="20" y="12" width="1" height="1"/><rect x="24" y="12" width="1" height="1"/><rect x="28" y="12" width="1" height="1"/><rect x="16" y="16" width="1" height="1"/><rect x="20" y="16" width="1" height="1"/><rect x="24" y="16" width="1" height="1"/><rect x="28" y="16" width="1" height="1"/><rect x="12" y="20" width="1" height="1"/><rect x="16" y="20" width="1" height="1"/><rect x="20" y="20" width="1" height="1"/><rect x="24" y="20" width="1" height="1"/><rect x="28" y="20" width="1" height="1"/><rect x="7" y="23" width="1" height="1"/><rect x="11" y="23" width="1" height="1"/><rect x="15" y="23" width="1" height="1"/><rect x="19" y="23" width="1" height="1"/><rect x="23" y="23" width="1" height="1"/><rect x="27" y="23" width="1" height="1"/></g><rect x="2" y="1" width="28.200" height="5.600" fill="#3c6cdc"/><rect x="2" y="1" width="28.200" height="1.600" fill="#78a8f8"/><rect x="2" y="5.600" width="28.200" height="1" fill="#2448b0"/><g shape-rendering="crispEdges" stroke="#a83070" fill="none"><path d="M3.5 10.500V26.5M7.5 10.500V26.5M11.5 10.500V26.5M15.5 10.500V26.5M19.5 10.500V22.5M23.5 10.500V22.5M27.5 10.500V22.5M29.5 10.500V22.5M3 10.5H30M3 14.5H30M3 18.5H30M3 22.5H30M2 26.500H15"/></g></svg></div><div class="lb " style="left:266px;top:119px">Months</div>
<div class="ic" style="left:340px;top:86px"><svg width="32" height="32" viewBox="0 0 32 32" ><path d="M30 1h2.300v29.500H3.500v-3H30z" fill="#000"/><path d="M1.500 23.500-.2 26 1 28.500H30l.6-1.500V22z" fill="#a8a850" stroke="#707020" stroke-width=".7"/><path d="M0 26.300H30.200M.6 27.600H30" stroke="#585818" stroke-width=".5"/><path d="M2 6h28.500v17.500l.3 2H.8l1.200-2.500z" fill="#ffff98"/><path d="M2.500 6v17.200L1 25.500" stroke="#7c7c34" stroke-width="1" fill="none"/><path d="M30.300 6v20" stroke="#6c6c24" stroke-width=".8" fill="none"/><g shape-rendering="crispEdges" fill="#fff"><rect x="3" y="7" width="3" height="3"/><rect x="7" y="7" width="3" height="3"/><rect x="11" y="7" width="3" height="3"/><rect x="15" y="7" width="3" height="3"/><rect x="19" y="7" width="3" height="3"/><rect x="23" y="7" width="3" height="3"/><rect x="27" y="7" width="3" height="3"/><rect x="3" y="11" width="3" height="3"/><rect x="7" y="11" width="3" height="3"/><rect x="11" y="11" width="3" height="3"/><rect x="15" y="11" width="3" height="3"/><rect x="19" y="11" width="3" height="3"/><rect x="23" y="11" width="3" height="3"/><rect x="27" y="11" width="3" height="3"/><rect x="3" y="15" width="3" height="3"/><rect x="7" y="15" width="3" height="3"/><rect x="11" y="15" width="3" height="3"/><rect x="15" y="15" width="3" height="3"/><rect x="19" y="15" width="3" height="3"/><rect x="23" y="15" width="3" height="3"/><rect x="27" y="15" width="3" height="3"/><rect x="3" y="19" width="3" height="3"/><rect x="7" y="19" width="3" height="3"/><rect x="11" y="19" width="3" height="3"/><rect x="15" y="19" width="3" height="3"/><rect x="19" y="19" width="3" height="3"/><rect x="23" y="19" width="3" height="3"/><rect x="27" y="19" width="3" height="3"/><rect x="2" y="23" width="3" height="2"/><rect x="6" y="23" width="3" height="2"/><rect x="10" y="23" width="3" height="2"/><rect x="14" y="23" width="3" height="2"/><rect x="18" y="23" width="3" height="2"/><rect x="22" y="23" width="3" height="2"/><rect x="26" y="23" width="3" height="2"/></g><g shape-rendering="crispEdges" fill="#ffff60"><rect x="24" y="8" width="1" height="1"/><rect x="28" y="8" width="1" height="1"/><rect x="20" y="12" width="1" height="1"/><rect x="24" y="12" width="1" height="1"/><rect x="28" y="12" width="1" height="1"/><rect x="16" y="16" width="1" height="1"/><rect x="20" y="16" width="1" height="1"/><rect x="24" y="16" width="1" height="1"/><rect x="28" y="16" width="1" height="1"/><rect x="12" y="20" width="1" height="1"/><rect x="16" y="20" width="1" height="1"/><rect x="20" y="20" width="1" height="1"/><rect x="24" y="20" width="1" height="1"/><rect x="28" y="20" width="1" height="1"/><rect x="7" y="23" width="1" height="1"/><rect x="11" y="23" width="1" height="1"/><rect x="15" y="23" width="1" height="1"/><rect x="19" y="23" width="1" height="1"/><rect x="23" y="23" width="1" height="1"/><rect x="27" y="23" width="1" height="1"/></g><rect x="2" y="1" width="28.200" height="5.600" fill="#3c6cdc"/><rect x="2" y="1" width="28.200" height="1.600" fill="#78a8f8"/><rect x="2" y="5.600" width="28.200" height="1" fill="#2448b0"/><g shape-rendering="crispEdges" stroke="#a83070" fill="none"><path d="M6.500 10.500H26.500V14.500H2.500V18.500H10.500V14.500M6.500 10.500V18.500M10.500 10.500V14.500M14.500 10.500V14.500M18.500 10.500V14.500M22.500 10.500V14.500"/></g></svg></div><div class="lb " style="left:316px;top:120px">Weeks</div>
<div class="ic" style="left:388px;top:85px"><svg width="32" height="32" viewBox="0 0 32 32" ><path d="M30 1h2.300v29.500H3.500v-3H30z" fill="#000"/><path d="M1.500 23.500-.2 26 1 28.500H30l.6-1.500V22z" fill="#a8a850" stroke="#707020" stroke-width=".7"/><path d="M0 26.300H30.200M.6 27.600H30" stroke="#585818" stroke-width=".5"/><path d="M2 6h28.500v17.500l.3 2H.8l1.200-2.500z" fill="#ffff98"/><path d="M2.500 6v17.200L1 25.500" stroke="#7c7c34" stroke-width="1" fill="none"/><path d="M30.300 6v20" stroke="#6c6c24" stroke-width=".8" fill="none"/><g shape-rendering="crispEdges" fill="#fff"><rect x="3" y="7" width="3" height="3"/><rect x="7" y="7" width="3" height="3"/><rect x="11" y="7" width="3" height="3"/><rect x="15" y="7" width="3" height="3"/><rect x="19" y="7" width="3" height="3"/><rect x="23" y="7" width="3" height="3"/><rect x="27" y="7" width="3" height="3"/><rect x="3" y="11" width="3" height="3"/><rect x="7" y="11" width="3" height="3"/><rect x="11" y="11" width="3" height="3"/><rect x="15" y="11" width="3" height="3"/><rect x="19" y="11" width="3" height="3"/><rect x="23" y="11" width="3" height="3"/><rect x="27" y="11" width="3" height="3"/><rect x="3" y="15" width="3" height="3"/><rect x="7" y="15" width="3" height="3"/><rect x="11" y="15" width="3" height="3"/><rect x="15" y="15" width="3" height="3"/><rect x="19" y="15" width="3" height="3"/><rect x="23" y="15" width="3" height="3"/><rect x="27" y="15" width="3" height="3"/><rect x="3" y="19" width="3" height="3"/><rect x="7" y="19" width="3" height="3"/><rect x="11" y="19" width="3" height="3"/><rect x="15" y="19" width="3" height="3"/><rect x="19" y="19" width="3" height="3"/><rect x="23" y="19" width="3" height="3"/><rect x="27" y="19" width="3" height="3"/><rect x="2" y="23" width="3" height="2"/><rect x="6" y="23" width="3" height="2"/><rect x="10" y="23" width="3" height="2"/><rect x="14" y="23" width="3" height="2"/><rect x="18" y="23" width="3" height="2"/><rect x="22" y="23" width="3" height="2"/><rect x="26" y="23" width="3" height="2"/></g><g shape-rendering="crispEdges" fill="#ffff60"><rect x="24" y="8" width="1" height="1"/><rect x="28" y="8" width="1" height="1"/><rect x="20" y="12" width="1" height="1"/><rect x="24" y="12" width="1" height="1"/><rect x="28" y="12" width="1" height="1"/><rect x="16" y="16" width="1" height="1"/><rect x="20" y="16" width="1" height="1"/><rect x="24" y="16" width="1" height="1"/><rect x="28" y="16" width="1" height="1"/><rect x="12" y="20" width="1" height="1"/><rect x="16" y="20" width="1" height="1"/><rect x="20" y="20" width="1" height="1"/><rect x="24" y="20" width="1" height="1"/><rect x="28" y="20" width="1" height="1"/><rect x="7" y="23" width="1" height="1"/><rect x="11" y="23" width="1" height="1"/><rect x="15" y="23" width="1" height="1"/><rect x="19" y="23" width="1" height="1"/><rect x="23" y="23" width="1" height="1"/><rect x="27" y="23" width="1" height="1"/></g><rect x="2" y="1" width="28.200" height="5.600" fill="#3c6cdc"/><rect x="2" y="1" width="28.200" height="1.600" fill="#78a8f8"/><rect x="2" y="5.600" width="28.200" height="1" fill="#2448b0"/><rect x="10.500" y="10.500" width="4" height="4" fill="#fff" stroke="#a83070" shape-rendering="crispEdges"/></svg></div><div class="lb " style="left:364px;top:119px">Days</div>
<div class="ic" style="left:437px;top:85px"><svg width="32" height="32" viewBox="0 0 32 32" ><path d="M30 1h2.300v29.500H3.500v-3H30z" fill="#000"/><path d="M1.500 23.500-.2 26 1 28.500H30l.6-1.500V22z" fill="#a8a850" stroke="#707020" stroke-width=".7"/><path d="M0 26.300H30.200M.6 27.600H30" stroke="#585818" stroke-width=".5"/><path d="M2 6h28.500v17.500l.3 2H.8l1.200-2.500z" fill="#ffff98"/><path d="M2.500 6v17.200L1 25.500" stroke="#7c7c34" stroke-width="1" fill="none"/><path d="M30.300 6v20" stroke="#6c6c24" stroke-width=".8" fill="none"/><g shape-rendering="crispEdges" fill="#fff"><rect x="3" y="7" width="3" height="3"/><rect x="7" y="7" width="3" height="3"/><rect x="11" y="7" width="3" height="3"/><rect x="15" y="7" width="3" height="3"/><rect x="19" y="7" width="3" height="3"/><rect x="23" y="7" width="3" height="3"/><rect x="27" y="7" width="3" height="3"/><rect x="3" y="11" width="3" height="3"/><rect x="7" y="11" width="3" height="3"/><rect x="11" y="11" width="3" height="3"/><rect x="15" y="11" width="3" height="3"/><rect x="19" y="11" width="3" height="3"/><rect x="23" y="11" width="3" height="3"/><rect x="27" y="11" width="3" height="3"/><rect x="3" y="15" width="3" height="3"/><rect x="7" y="15" width="3" height="3"/><rect x="11" y="15" width="3" height="3"/><rect x="15" y="15" width="3" height="3"/><rect x="19" y="15" width="3" height="3"/><rect x="23" y="15" width="3" height="3"/><rect x="27" y="15" width="3" height="3"/><rect x="3" y="19" width="3" height="3"/><rect x="7" y="19" width="3" height="3"/><rect x="11" y="19" width="3" height="3"/><rect x="15" y="19" width="3" height="3"/><rect x="19" y="19" width="3" height="3"/><rect x="23" y="19" width="3" height="3"/><rect x="27" y="19" width="3" height="3"/><rect x="2" y="23" width="3" height="2"/><rect x="6" y="23" width="3" height="2"/><rect x="10" y="23" width="3" height="2"/><rect x="14" y="23" width="3" height="2"/><rect x="18" y="23" width="3" height="2"/><rect x="22" y="23" width="3" height="2"/><rect x="26" y="23" width="3" height="2"/></g><g shape-rendering="crispEdges" fill="#ffff60"><rect x="24" y="8" width="1" height="1"/><rect x="28" y="8" width="1" height="1"/><rect x="20" y="12" width="1" height="1"/><rect x="24" y="12" width="1" height="1"/><rect x="28" y="12" width="1" height="1"/><rect x="16" y="16" width="1" height="1"/><rect x="20" y="16" width="1" height="1"/><rect x="24" y="16" width="1" height="1"/><rect x="28" y="16" width="1" height="1"/><rect x="12" y="20" width="1" height="1"/><rect x="16" y="20" width="1" height="1"/><rect x="20" y="20" width="1" height="1"/><rect x="24" y="20" width="1" height="1"/><rect x="28" y="20" width="1" height="1"/><rect x="7" y="23" width="1" height="1"/><rect x="11" y="23" width="1" height="1"/><rect x="15" y="23" width="1" height="1"/><rect x="19" y="23" width="1" height="1"/><rect x="23" y="23" width="1" height="1"/><rect x="27" y="23" width="1" height="1"/></g><rect x="2" y="1" width="28.200" height="5.600" fill="#3c6cdc"/><rect x="2" y="1" width="28.200" height="1.600" fill="#78a8f8"/><rect x="2" y="5.600" width="28.200" height="1" fill="#2448b0"/><rect x="10.500" y="10.500" width="4" height="4" fill="#fff" stroke="#a83070" shape-rendering="crispEdges"/><rect x="18.500" y="18.500" width="4" height="4" fill="#fff" stroke="#a83070" shape-rendering="crispEdges"/><path d="M16 12C19 10.500 21 12.500 21 15.500" stroke="#a83070" stroke-width="1.100" fill="none"/><path d="M19 14.500h4l-2 2.500z" fill="#a83070"/></svg></div><div class="lb " style="left:412px;top:119px">Interv.</div>
<div class="vsep" style="left:481px;top:84px"></div>
<div class="ic" style="left:494px;top:85px"><svg width="32" height="32" viewBox="0 0 32 32" ><path d="M30 1h2.300v29.500H3.500v-3H30z" fill="#000"/><path d="M1.500 23.500-.2 26 1 28.500H30l.6-1.500V22z" fill="#a8a850" stroke="#707020" stroke-width=".7"/><path d="M0 26.300H30.200M.6 27.600H30" stroke="#585818" stroke-width=".5"/><path d="M2 6h28.500v17.500l.3 2H.8l1.200-2.500z" fill="#ffff98"/><path d="M2.500 6v17.200L1 25.500" stroke="#7c7c34" stroke-width="1" fill="none"/><path d="M30.300 6v20" stroke="#6c6c24" stroke-width=".8" fill="none"/><g shape-rendering="crispEdges" fill="#fff"><rect x="3" y="7" width="3" height="3"/><rect x="7" y="7" width="3" height="3"/><rect x="11" y="7" width="3" height="3"/><rect x="15" y="7" width="3" height="3"/><rect x="19" y="7" width="3" height="3"/><rect x="23" y="7" width="3" height="3"/><rect x="27" y="7" width="3" height="3"/><rect x="3" y="11" width="3" height="3"/><rect x="7" y="11" width="3" height="3"/><rect x="11" y="11" width="3" height="3"/><rect x="15" y="11" width="3" height="3"/><rect x="19" y="11" width="3" height="3"/><rect x="23" y="11" width="3" height="3"/><rect x="27" y="11" width="3" height="3"/><rect x="3" y="15" width="3" height="3"/><rect x="7" y="15" width="3" height="3"/><rect x="11" y="15" width="3" height="3"/><rect x="15" y="15" width="3" height="3"/><rect x="19" y="15" width="3" height="3"/><rect x="23" y="15" width="3" height="3"/><rect x="27" y="15" width="3" height="3"/><rect x="3" y="19" width="3" height="3"/><rect x="7" y="19" width="3" height="3"/><rect x="11" y="19" width="3" height="3"/><rect x="15" y="19" width="3" height="3"/><rect x="19" y="19" width="3" height="3"/><rect x="23" y="19" width="3" height="3"/><rect x="27" y="19" width="3" height="3"/><rect x="2" y="23" width="3" height="2"/><rect x="6" y="23" width="3" height="2"/><rect x="10" y="23" width="3" height="2"/><rect x="14" y="23" width="3" height="2"/><rect x="18" y="23" width="3" height="2"/><rect x="22" y="23" width="3" height="2"/><rect x="26" y="23" width="3" height="2"/></g><g shape-rendering="crispEdges" fill="#ffff60"><rect x="24" y="8" width="1" height="1"/><rect x="28" y="8" width="1" height="1"/><rect x="20" y="12" width="1" height="1"/><rect x="24" y="12" width="1" height="1"/><rect x="28" y="12" width="1" height="1"/><rect x="16" y="16" width="1" height="1"/><rect x="20" y="16" width="1" height="1"/><rect x="24" y="16" width="1" height="1"/><rect x="28" y="16" width="1" height="1"/><rect x="12" y="20" width="1" height="1"/><rect x="16" y="20" width="1" height="1"/><rect x="20" y="20" width="1" height="1"/><rect x="24" y="20" width="1" height="1"/><rect x="28" y="20" width="1" height="1"/><rect x="7" y="23" width="1" height="1"/><rect x="11" y="23" width="1" height="1"/><rect x="15" y="23" width="1" height="1"/><rect x="19" y="23" width="1" height="1"/><rect x="23" y="23" width="1" height="1"/><rect x="27" y="23" width="1" height="1"/></g><rect x="2" y="1" width="28.200" height="5.600" fill="#3c6cdc"/><rect x="2" y="1" width="28.200" height="1.600" fill="#78a8f8"/><rect x="2" y="5.600" width="28.200" height="1" fill="#2448b0"/><g shape-rendering="crispEdges"><rect x="10" y="10" width="11" height="11" fill="#000"/><rect x="11" y="11" width="9" height="8" fill="#fff"/><rect x="12" y="14" width="4" height="3" fill="#000080"/></g><path d="M16 11.500 19.500 15.500 16 19.500z" fill="#000080"/></svg></div><div class="lb " style="left:469px;top:119px">1 feb 05</div>
<div class="ic" style="left:543px;top:85px"><svg width="32" height="32" viewBox="0 0 32 32" ><g transform="translate(1 1)"><path d="M2 1h28.500l1.500 1v27l-1 2H4l-4-3 2-4z" fill="#fff"/></g><path d="M2 1h28.500l1.500 1v27l-1 2H4l-4-3 2-4z" fill="#aca899"/><g shape-rendering="crispEdges" fill="#ece9d8"><rect x="3" y="7" width="3" height="3" fill="#fff"/><rect x="7" y="7" width="3" height="3" fill="#fff"/><rect x="11" y="7" width="3" height="3" fill="#fff"/><rect x="15" y="7" width="3" height="3" fill="#fff"/><rect x="20" y="7" width="1" height="3" fill="#fff"/><rect x="19" y="8" width="3" height="1" fill="#fff"/><rect x="24" y="7" width="1" height="3" fill="#fff"/><rect x="23" y="8" width="3" height="1" fill="#fff"/><rect x="28" y="7" width="1" height="3" fill="#fff"/><rect x="27" y="8" width="3" height="1" fill="#fff"/><rect x="3" y="11" width="3" height="3" fill="#fff"/><rect x="7" y="11" width="3" height="3" fill="#fff"/><rect x="11" y="11" width="3" height="3" fill="#fff"/><rect x="16" y="11" width="1" height="3" fill="#fff"/><rect x="15" y="12" width="3" height="1" fill="#fff"/><rect x="20" y="11" width="1" height="3" fill="#fff"/><rect x="19" y="12" width="3" height="1" fill="#fff"/><rect x="24" y="11" width="1" height="3" fill="#fff"/><rect x="23" y="12" width="3" height="1" fill="#fff"/><rect x="28" y="11" width="1" height="3" fill="#fff"/><rect x="27" y="12" width="3" height="1" fill="#fff"/><rect x="3" y="15" width="3" height="3" fill="#fff"/><rect x="7" y="15" width="3" height="3" fill="#fff"/><rect x="12" y="15" width="1" height="3" fill="#fff"/><rect x="11" y="16" width="3" height="1" fill="#fff"/><rect x="16" y="15" width="1" height="3" fill="#fff"/><rect x="15" y="16" width="3" height="1" fill="#fff"/><rect x="20" y="15" width="1" height="3" fill="#fff"/><rect x="19" y="16" width="3" height="1" fill="#fff"/><rect x="24" y="15" width="1" height="3" fill="#fff"/><rect x="23" y="16" width="3" height="1" fill="#fff"/><rect x="28" y="15" width="1" height="3" fill="#fff"/><rect x="27" y="16" width="3" height="1" fill="#fff"/><rect x="3" y="19" width="3" height="3" fill="#fff"/><rect x="8" y="19" width="1" height="3" fill="#fff"/><rect x="7" y="20" width="3" height="1" fill="#fff"/><rect x="12" y="19" width="1" height="3" fill="#fff"/><rect x="11" y="20" width="3" height="1" fill="#fff"/><rect x="16" y="19" width="1" height="3" fill="#fff"/><rect x="15" y="20" width="3" height="1" fill="#fff"/><rect x="20" y="19" width="1" height="3" fill="#fff"/><rect x="19" y="20" width="3" height="1" fill="#fff"/><rect x="24" y="19" width="1" height="3" fill="#fff"/><rect x="23" y="20" width="3" height="1" fill="#fff"/><rect x="28" y="19" width="1" height="3" fill="#fff"/><rect x="27" y="20" width="3" height="1" fill="#fff"/><rect x="2" y="23" width="1" height="1" fill="#fff"/><rect x="3" y="24" width="1" height="1" fill="#fff"/><rect x="4" y="23" width="1" height="1" fill="#fff"/><rect x="6" y="23" width="1" height="1" fill="#fff"/><rect x="7" y="24" width="1" height="1" fill="#fff"/><rect x="8" y="23" width="1" height="1" fill="#fff"/><rect x="10" y="23" width="1" height="1" fill="#fff"/><rect x="11" y="24" width="1" height="1" fill="#fff"/><rect x="12" y="23" width="1" height="1" fill="#fff"/><rect x="14" y="23" width="1" height="1" fill="#fff"/><rect x="15" y="24" width="1" height="1" fill="#fff"/><rect x="16" y="23" width="1" height="1" fill="#fff"/><rect x="18" y="23" width="1" height="1" fill="#fff"/><rect x="19" y="24" width="1" height="1" fill="#fff"/><rect x="20" y="23" width="1" height="1" fill="#fff"/><rect x="22" y="23" width="1" height="1" fill="#fff"/><rect x="23" y="24" width="1" height="1" fill="#fff"/><rect x="24" y="23" width="1" height="1" fill="#fff"/><rect x="26" y="23" width="1" height="1" fill="#fff"/><rect x="27" y="24" width="1" height="1" fill="#fff"/><rect x="28" y="23" width="1" height="1" fill="#fff"/></g><g shape-rendering="crispEdges"><rect x="10" y="10" width="10" height="10" fill="#aca899"/><rect x="11" y="11" width="9" height="8" fill="#fff"/><rect x="15" y="14" width="4" height="3" fill="#aca899"/></g><path d="M15.500 11.500 12 15.500 15.500 19.500z" fill="#aca899"/></svg></div><div class="lb dis" style="left:518px;top:119px">7 feb 05</div>
<div class="vsep" style="left:587px;top:84px"></div>
<div class="ic" style="left:600px;top:85px"><svg width="32" height="32" viewBox="0 0 32 32" style="overflow:visible"><path d="M30 1h2.300v29.500H3.500v-3H30z" fill="#000"/><path d="M1.500 23.500-.2 26 1 28.500H30l.6-1.500V22z" fill="#a8a850" stroke="#707020" stroke-width=".7"/><path d="M0 26.300H30.200M.6 27.600H30" stroke="#585818" stroke-width=".5"/><path d="M2 6h28.500v17.500l.3 2H.8l1.200-2.500z" fill="#ffff98"/><path d="M2.500 6v17.200L1 25.500" stroke="#7c7c34" stroke-width="1" fill="none"/><path d="M30.300 6v20" stroke="#6c6c24" stroke-width=".8" fill="none"/><g shape-rendering="crispEdges" fill="#fff"><rect x="3" y="7" width="3" height="3"/><rect x="7" y="7" width="3" height="3"/><rect x="11" y="7" width="3" height="3"/><rect x="15" y="7" width="3" height="3"/><rect x="19" y="7" width="3" height="3"/><rect x="23" y="7" width="3" height="3"/><rect x="27" y="7" width="3" height="3"/><rect x="3" y="11" width="3" height="3"/><rect x="7" y="11" width="3" height="3"/><rect x="11" y="11" width="3" height="3"/><rect x="15" y="11" width="3" height="3"/><rect x="19" y="11" width="3" height="3"/><rect x="23" y="11" width="3" height="3"/><rect x="27" y="11" width="3" height="3"/><rect x="3" y="15" width="3" height="3"/><rect x="7" y="15" width="3" height="3"/><rect x="11" y="15" width="3" height="3"/><rect x="15" y="15" width="3" height="3"/><rect x="19" y="15" width="3" height="3"/><rect x="23" y="15" width="3" height="3"/><rect x="27" y="15" width="3" height="3"/><rect x="3" y="19" width="3" height="3"/><rect x="7" y="19" width="3" height="3"/><rect x="11" y="19" width="3" height="3"/><rect x="15" y="19" width="3" height="3"/><rect x="19" y="19" width="3" height="3"/><rect x="23" y="19" width="3" height="3"/><rect x="27" y="19" width="3" height="3"/><rect x="2" y="23" width="3" height="2"/><rect x="6" y="23" width="3" height="2"/><rect x="10" y="23" width="3" height="2"/><rect x="14" y="23" width="3" height="2"/><rect x="18" y="23" width="3" height="2"/><rect x="22" y="23" width="3" height="2"/><rect x="26" y="23" width="3" height="2"/></g><g shape-rendering="crispEdges" fill="#ffff60"><rect x="24" y="8" width="1" height="1"/><rect x="28" y="8" width="1" height="1"/><rect x="20" y="12" width="1" height="1"/><rect x="24" y="12" width="1" height="1"/><rect x="28" y="12" width="1" height="1"/><rect x="16" y="16" width="1" height="1"/><rect x="20" y="16" width="1" height="1"/><rect x="24" y="16" width="1" height="1"/><rect x="28" y="16" width="1" height="1"/><rect x="12" y="20" width="1" height="1"/><rect x="16" y="20" width="1" height="1"/><rect x="20" y="20" width="1" height="1"/><rect x="24" y="20" width="1" height="1"/><rect x="28" y="20" width="1" height="1"/><rect x="7" y="23" width="1" height="1"/><rect x="11" y="23" width="1" height="1"/><rect x="15" y="23" width="1" height="1"/><rect x="19" y="23" width="1" height="1"/><rect x="23" y="23" width="1" height="1"/><rect x="27" y="23" width="1" height="1"/></g><rect x="2" y="1" width="28.200" height="5.600" fill="#3c6cdc"/><rect x="2" y="1" width="28.200" height="1.600" fill="#78a8f8"/><rect x="2" y="5.600" width="28.200" height="1" fill="#2448b0"/><rect x="0" y="13" width="25.500" height="5.400" fill="#000"/><rect x="1.00" y="14" width="2.50" height="3.400" fill="#ffff00"/><rect x="3.40" y="14" width="2.50" height="3.400" fill="#d0ff00"/><rect x="5.80" y="14" width="2.50" height="3.400" fill="#20f000"/><rect x="8.20" y="14" width="2.50" height="3.400" fill="#00f080"/><rect x="10.60" y="14" width="2.50" height="3.400" fill="#00f0e0"/><rect x="13.00" y="14" width="2.50" height="3.400" fill="#00c0ff"/><rect x="15.40" y="14" width="2.50" height="3.400" fill="#0040ff"/><rect x="17.80" y="14" width="2.50" height="3.400" fill="#4000ff"/><rect x="20.20" y="14" width="2.50" height="3.400" fill="#a000ff"/><rect x="22.60" y="14" width="2.50" height="3.400" fill="#f000c0"/><path d="M25 8.800 31.800 15.600 25 22.200z" fill="#ff0020" stroke="#000" stroke-width="1.100" stroke-linejoin="round"/></svg></div><div class="lb " style="left:575px;top:119px">Shift</div>
<div class="vsep" style="left:644px;top:84px"></div>
<div class="ic" style="left:657px;top:85px"><svg width="32" height="32" viewBox="0 0 32 32" ><path d="M27.099999999999998 6.2V22.599999999999998H5.2" stroke="#8894b8" stroke-width="1" fill="none"/><rect x="3.2" y="4.2" width="23" height="17.5" rx="1.200" fill="#fbf8ee" stroke="#2c64d8" stroke-width="1.300"/><path d="M3.2 21.7H26.2V7.2" stroke="#1c48b8" stroke-width="1.300" fill="none"/><rect x="3.2" y="4.2" width="23" height="3.600" rx="1" fill="#3c7cec"/><rect x="3.7" y="4.5" width="22" height="1" fill="#78acf8"/><rect x="22.599999999999998" y="4.9" width="2.300" height="2.300" fill="#f07830"/><rect x="19.7" y="5.4" width="1.400" height="1.400" fill="#a8c8ff"/><rect x="17.2" y="5.4" width="1.400" height="1.400" fill="#a8c8ff"/><path d="M5.2 10.5H24.2M5.2 12.8H24.2M5.2 15.2H24.2M5.2 17.6H24.2M5.2 19.9H24.2" stroke="#b8b8b8" stroke-width=".9"/><path d="M30.099999999999998 12V27.9H9.2" stroke="#8894b8" stroke-width="1" fill="none"/><rect x="7.2" y="10" width="22" height="17" rx="1.200" fill="#fbf8ee" stroke="#2c64d8" stroke-width="1.300"/><path d="M7.2 27H29.2V13" stroke="#1c48b8" stroke-width="1.300" fill="none"/><rect x="7.2" y="10" width="22" height="3.600" rx="1" fill="#3c7cec"/><rect x="7.7" y="10.3" width="21" height="1" fill="#78acf8"/><rect x="25.599999999999998" y="10.7" width="2.300" height="2.300" fill="#f07830"/><rect x="22.7" y="11.2" width="1.400" height="1.400" fill="#a8c8ff"/><rect x="20.2" y="11.2" width="1.400" height="1.400" fill="#a8c8ff"/><path d="M9.2 16.3H27.2M9.2 18.7H27.2M9.2 21.0H27.2M9.2 23.4H27.2" stroke="#b8b8b8" stroke-width=".9"/></svg></div><div class="lb " style="left:633px;top:119px">Window</div>
<div class="arr" style="left:701px;top:107px;width:5px"></div><div class="arr" style="left:702px;top:108px;width:3px"></div><div class="arr" style="left:703px;top:109px;width:1px"></div>
<div id="treebox"><i></i></div>
<div id="tree">
<div class="vd" style="left:11px;top:151px;height:303px"></div>
<div class="vd" style="left:30px;top:155px;height:5px"></div>
<div class="vd" style="left:49px;top:173px;height:155px"></div>
<div class="vd" style="left:30px;top:353px;height:83px"></div>
<div class="pm" style="left:7px;top:141px"><i></i></div>
<div class="hd" style="left:17px;top:145px;width:5px"></div>
<div class="ti" style="left:22px;top:138px"><svg width="16" height="16" viewBox="0 0 16 16" ><g shape-rendering="crispEdges"><path d="M0 1.500h16M0 3.500h16M0 5.500h16M0 15.500h16" stroke="#c0c0c4" fill="none"/><rect x="3" y="8" width="3" height="7" fill="#a8a8a8"/><rect x="8" y="5" width="3" height="10" fill="#a8a8a8"/><rect x="13" y="6" width="3" height="9" fill="#a8a8a8"/><rect x="1" y="7" width="4" height="7" fill="#000080"/><rect x="6" y="4" width="4" height="10" fill="#000080"/><rect x="11" y="5" width="4" height="9" fill="#000080"/></g></svg></div>
<div class="tt" style="left:43px;top:137px">Graphic</div>
<div class="pm" style="left:26px;top:161px"><i></i></div>
<div class="hd" style="left:36px;top:165px;width:5px"></div>
<div class="ti" style="left:42px;top:156px"><svg width="16" height="16" viewBox="0 0 16 16" ><ellipse cx="8.300" cy="13.700" rx="4" ry="2.300" fill="#202088"/><path d="M7.500 9h4v3.200h-4z" fill="#5050d0"/><path d="M10 9h1.500v4H10z" fill="#282898"/><ellipse cx="6.400" cy="12.400" rx="3.500" ry="2.400" fill="#dcdce8"/><ellipse cx="5.800" cy="12" rx="2.400" ry="1.500" fill="#fff"/><defs><linearGradient id="pcb" x1="0" y1="0" x2="1" y2="1"><stop offset="0" stop-color="#a0e0ff"/><stop offset=".5" stop-color="#48a8ff"/><stop offset="1" stop-color="#2078f0"/></linearGradient></defs><path d="M3 1.400 6 .2h6.800L13 1.200v8L11.300 9.600 4.600 9.700 3 7.200z" fill="url(#pcb)" stroke="#7090e4" stroke-width=".8"/><path d="M11.600 .8v8.600L13 9.200V1.200z" fill="#2848c8"/><path d="M6 2.500 9 2.200 7.500 4z" fill="#d8f4ff"/><path d="M2.400 1.600v5.600l1 1.800" stroke="#b0c8f4" stroke-width=".8" fill="none"/></svg></div>
<div class="tt" style="left:62px;top:155px">Piano terra</div>
<div class="hd" style="left:49px;top:183px;width:11px"></div>
<div class="ti" style="left:60px;top:174px"><svg width="16" height="16" viewBox="0 0 16 16" ><path d="M7.500 1v2M7.500 13v2M1 7.500h2M13 7.500h2M2 2l2 2M12 12l2 2M14 2l-2 2M4 12l-2 2" stroke="#ff0000" stroke-width="1.100"/><circle cx="8" cy="8" r="3.500" fill="#fff" stroke="#000" stroke-width="1"/><circle cx="8" cy="8" r="2" fill="#ff0000"/></svg></div>
<div class="tt b" style="left:80px;top:173px;color:#000080">kWh</div>
<div class="hd" style="left:49px;top:201px;width:11px"></div>
<div class="ti" style="left:60px;top:192px"><svg width="16" height="16" viewBox="0 0 16 16" ><circle cx="8" cy="8" r="3.500" fill="#fff" stroke="#000" stroke-width="1"/></svg></div>
<div class="tt b" style="left:80px;top:191px;color:#008000">kvarh</div>
<div class="hd" style="left:49px;top:219px;width:11px"></div>
<div class="ti" style="left:60px;top:210px"><svg width="16" height="16" viewBox="0 0 16 16" ><circle cx="8" cy="8" r="3.500" fill="#fff" stroke="#000" stroke-width="1"/></svg></div>
<div class="tt b" style="left:80px;top:209px;color:#008080">kVAh</div>
<div class="hd" style="left:49px;top:237px;width:11px"></div>
<div class="ti" style="left:60px;top:228px"><svg width="16" height="16" viewBox="0 0 16 16" ><circle cx="8" cy="8" r="3.500" fill="#fff" stroke="#000" stroke-width="1"/></svg></div>
<div class="tt b" style="left:80px;top:227px;color:#800000">PF</div>
<div class="hd" style="left:49px;top:255px;width:11px"></div>
<div class="ti" style="left:60px;top:246px"><svg width="16" height="16" viewBox="0 0 16 16" ><circle cx="8" cy="8" r="3.500" fill="#fff" stroke="#000" stroke-width="1"/></svg></div>
<div class="tt b" style="left:80px;top:245px;color:#800080">W av</div>
<div class="hd" style="left:49px;top:273px;width:11px"></div>
<div class="ti" style="left:60px;top:264px"><svg width="16" height="16" viewBox="0 0 16 16" ><circle cx="8" cy="8" r="3.500" fill="#fff" stroke="#000" stroke-width="1"/></svg></div>
<div class="tt b" style="left:80px;top:263px;color:#808000">var av</div>
<div class="hd" style="left:49px;top:291px;width:11px"></div>
<div class="ti" style="left:60px;top:282px"><svg width="16" height="16" viewBox="0 0 16 16" ><circle cx="8" cy="8" r="3.500" fill="#fff" stroke="#000" stroke-width="1"/></svg></div>
<div class="tt b" style="left:80px;top:281px;color:#c0c0c0">VA av</div>
<div class="hd" style="left:49px;top:309px;width:11px"></div>
<div class="ti" style="left:60px;top:300px"><svg width="16" height="16" viewBox="0 0 16 16" ><circle cx="8" cy="8" r="3.500" fill="#fff" stroke="#000" stroke-width="1"/></svg></div>
<div class="tt b" style="left:80px;top:299px;color:#808080">PF av</div>
<div class="hd" style="left:49px;top:327px;width:11px"></div>
<div class="ti" style="left:60px;top:318px"><svg width="16" height="16" viewBox="0 0 16 16" ><circle cx="8" cy="8" r="3.500" fill="#fff" stroke="#000" stroke-width="1"/></svg></div>
<div class="tt b" style="left:80px;top:317px;color:#0000ff">Cost</div>
<div class="pm" style="left:7px;top:341px"><i></i></div>
<div class="hd" style="left:17px;top:345px;width:5px"></div>
<div class="ti" style="left:22px;top:336px"><svg width="16" height="16" viewBox="0 0 16 16" ><path d="M2.200 7.500 3 11 6.500 12.800 12 11.500 13.500 7.500 9 3z" fill="#dce8ff" stroke="#8898c0" stroke-width=".6"/><path d="M6.500 8v4.800L3 11 2.200 7.500z" fill="#b8c8ec"/><path d="M1 6.200 5.500 2 9.200 1 5.500 7z" fill="#e84020"/><path d="M9.200 1 14 6.500 13 7 9 2.600 5.500 7 5 6.500z" fill="#a04838"/><rect x="9" y=".3" width="1" height="1.500" fill="#604040"/><rect x="6.300" y="8.300" width="1.700" height="1.700" fill="#2060e0"/><rect x="9" y="8.200" width="1.400" height="2.800" fill="#2060e0"/></svg></div>
<div class="tt" style="left:43px;top:335px">Copia di dbMyPC.edb</div>
<div class="hd" style="left:30px;top:363px;width:12px"></div>
<div class="ti" style="left:42px;top:354px"><svg width="16" height="16" viewBox="0 0 16 16" ><ellipse cx="8.300" cy="13.700" rx="4" ry="2.300" fill="#202088"/><path d="M7.500 9h4v3.200h-4z" fill="#5050d0"/><path d="M10 9h1.500v4H10z" fill="#282898"/><ellipse cx="6.400" cy="12.400" rx="3.500" ry="2.400" fill="#dcdce8"/><ellipse cx="5.800" cy="12" rx="2.400" ry="1.500" fill="#fff"/><path d="M3 1.400 6 .2h6.800L13 1.200v8L11.300 9.600 4.600 9.700 3 7.200z" fill="#0c1018" stroke="#4450b8" stroke-width=".8"/><path d="M11.600 .8v8.600L13 9.200V1.200z" fill="#1c24a0"/><path d="M2.400 1.600v5.600l1 1.800" stroke="#a8b0ec" stroke-width=".8" fill="none"/><path d="M6 .2h6.800" stroke="#2c3cb8" stroke-width="1"/></svg></div>
<div class="tt" style="left:62px;top:353px">Piano terra</div>
<div class="hd" style="left:30px;top:381px;width:12px"></div>
<div class="ti" style="left:42px;top:372px"><svg width="16" height="16" viewBox="0 0 16 16" ><ellipse cx="8.300" cy="13.700" rx="4" ry="2.300" fill="#202088"/><path d="M7.500 9h4v3.200h-4z" fill="#5050d0"/><path d="M10 9h1.500v4H10z" fill="#282898"/><ellipse cx="6.400" cy="12.400" rx="3.500" ry="2.400" fill="#dcdce8"/><ellipse cx="5.800" cy="12" rx="2.400" ry="1.500" fill="#fff"/><path d="M3 1.400 6 .2h6.800L13 1.200v8L11.300 9.600 4.600 9.700 3 7.200z" fill="#0c1018" stroke="#4450b8" stroke-width=".8"/><path d="M11.600 .8v8.600L13 9.200V1.200z" fill="#1c24a0"/><path d="M2.400 1.600v5.600l1 1.800" stroke="#a8b0ec" stroke-width=".8" fill="none"/><path d="M6 .2h6.800" stroke="#2c3cb8" stroke-width="1"/></svg></div>
<div class="tt" style="left:62px;top:371px">Produzione</div>
<div class="hd" style="left:30px;top:399px;width:12px"></div>
<div class="ti" style="left:42px;top:390px"><svg width="16" height="16" viewBox="0 0 16 16" ><ellipse cx="8.300" cy="13.700" rx="4" ry="2.300" fill="#202088"/><path d="M7.500 9h4v3.200h-4z" fill="#5050d0"/><path d="M10 9h1.500v4H10z" fill="#282898"/><ellipse cx="6.400" cy="12.400" rx="3.500" ry="2.400" fill="#dcdce8"/><ellipse cx="5.800" cy="12" rx="2.400" ry="1.500" fill="#fff"/><path d="M3 1.400 6 .2h6.800L13 1.200v8L11.300 9.600 4.600 9.700 3 7.200z" fill="#0c1018" stroke="#4450b8" stroke-width=".8"/><path d="M11.600 .8v8.600L13 9.200V1.200z" fill="#1c24a0"/><path d="M2.400 1.600v5.600l1 1.800" stroke="#a8b0ec" stroke-width=".8" fill="none"/><path d="M6 .2h6.800" stroke="#2c3cb8" stroke-width="1"/></svg></div>
<div class="tt" style="left:62px;top:389px">Generale ENEL</div>
<div class="hd" style="left:30px;top:417px;width:12px"></div>
<div class="ti" style="left:42px;top:408px"><svg width="16" height="16" viewBox="0 0 16 16" ><ellipse cx="8.300" cy="13.700" rx="4" ry="2.300" fill="#202088"/><path d="M7.500 9h4v3.200h-4z" fill="#5050d0"/><path d="M10 9h1.500v4H10z" fill="#282898"/><ellipse cx="6.400" cy="12.400" rx="3.500" ry="2.400" fill="#dcdce8"/><ellipse cx="5.800" cy="12" rx="2.400" ry="1.500" fill="#fff"/><path d="M3 1.400 6 .2h6.800L13 1.200v8L11.300 9.600 4.600 9.700 3 7.200z" fill="#0c1018" stroke="#4450b8" stroke-width=".8"/><path d="M11.600 .8v8.600L13 9.200V1.200z" fill="#1c24a0"/><path d="M2.400 1.600v5.600l1 1.800" stroke="#a8b0ec" stroke-width=".8" fill="none"/><path d="M6 .2h6.800" stroke="#2c3cb8" stroke-width="1"/></svg></div>
<div class="hlt" style="left:60px;top:408px"></div>
<div class="tt" style="left:62px;top:407px">Primo piano</div>
<div class="hd" style="left:30px;top:435px;width:12px"></div>
<div class="ti" style="left:42px;top:426px"><svg width="16" height="16" viewBox="0 0 16 16" ><ellipse cx="8.300" cy="13.700" rx="4" ry="2.300" fill="#202088"/><path d="M7.500 9h4v3.200h-4z" fill="#5050d0"/><path d="M10 9h1.500v4H10z" fill="#282898"/><ellipse cx="6.400" cy="12.400" rx="3.500" ry="2.400" fill="#dcdce8"/><ellipse cx="5.800" cy="12" rx="2.400" ry="1.500" fill="#fff"/><path d="M3 1.400 6 .2h6.800L13 1.200v8L11.300 9.600 4.600 9.700 3 7.200z" fill="#0c1018" stroke="#4450b8" stroke-width=".8"/><path d="M11.600 .8v8.600L13 9.200V1.200z" fill="#1c24a0"/><path d="M2.400 1.600v5.600l1 1.800" stroke="#a8b0ec" stroke-width=".8" fill="none"/><path d="M6 .2h6.800" stroke="#2c3cb8" stroke-width="1"/></svg></div>
<div class="tt" style="left:62px;top:425px">Muletti</div>
<div class="hd" style="left:11px;top:453px;width:11px"></div>
<div class="ti" style="left:22px;top:444px"><svg width="16" height="16" viewBox="0 0 16 16" ><defs><linearGradient id="bn" x1="0" y1="0" x2="1" y2="1"><stop offset="0" stop-color="#d8ecff"/><stop offset="1" stop-color="#88b8f0"/></linearGradient></defs><path d="M.5 3.800 6.500 1.500 13.500 .5 14.500 9 7 15 2.500 13z" fill="url(#bn)" stroke="#90b0e0" stroke-width=".6"/><path d="M13.500 .5 14.500 9 7 15" stroke="#8890a0" stroke-width=".9" fill="none"/><path d="M.5 3.800 6.800 4.600 13.500 .5" stroke="#b0d0f8" stroke-width=".7" fill="none"/><path d="M7 8.500 9.500 5.500 11.500 6.500M11.500 8l-1 3.500-3 .5M7.500 11.500 7 8.500" stroke="#10a020" stroke-width="1.400" fill="none"/></svg></div>
<div class="tt" style="left:43px;top:443px">Recycled bin</div>
</div>
<div id="mdi"><i></i></div><div id="mdiB"></div>
<div class="win" style="top:136px;height:315px"><div class="tbar" style="background:linear-gradient(to bottom,#5a7fe0 1.67%,#9db9eb 5.00%,#8ca8e8 8.33%,#7f9ce4 11.67%,#7a96df 15.00%,#7a96df 18.33%,#7a96df 21.67%,#7a96df 25.00%,#7a96df 28.33%,#7a96df 31.67%,#7a96df 35.00%,#7a96df 38.33%,#7a96df 41.67%,#7a96df 45.00%,#7a96df 48.33%,#7a96df 51.67%,#7a96df 55.00%,#7b9ae2 58.33%,#7b9ae2 61.67%,#7b9ae2 65.00%,#7b9ae2 68.33%,#80a6e9 71.67%,#80a6e9 75.00%,#80a6e9 78.33%,#80a6e9 81.67%,#80a6e9 85.00%,#80a6e9 88.33%,#7e9ee6 91.67%,#7a8ee0 95.00%,#7888e0 98.33%)"></div><div style="left:0;top:30px;width:4px;height:285px;background:linear-gradient(to right,#6878d6,#8298e8 40%,#8298e8 70%,#7486de)"></div><div style="left:742px;top:30px;width:4px;height:285px;background:linear-gradient(to right,#7c90e4,#7686de 50%,#6a78d2 80%,#5c62c0)"></div><div style="left:0;top:311px;width:746px;height:4px;background:linear-gradient(to bottom,#7c90e4,#7686de 50%,#6a78d2 80%,#5c5cb8)"></div><div style="left:0;top:311px;width:4px;height:4px;background:linear-gradient(to right,#6878d6,#8298e8 40%,#8298e8 70%,#7486de);clip-path:polygon(0 0,100% 0,0 100%)"></div><div class="wi"><svg width="16" height="16" viewBox="0 0 16 16" ><g shape-rendering="crispEdges"><rect x="1" y="0" width="1" height="15" fill="#000"/><rect x="0" y="0" width="2" height="1" fill="#000"/><rect x="0" y="4" width="1" height="1" fill="#000"/><rect x="0" y="8" width="1" height="1" fill="#000"/><rect x="0" y="11" width="1" height="1" fill="#000"/><rect x="1" y="14" width="15" height="1" fill="#000"/><rect x="4" y="15" width="1" height="1" fill="#000"/><rect x="8" y="15" width="1" height="1" fill="#000"/><rect x="12" y="15" width="1" height="1" fill="#000"/><rect x="3" y="1" width="3" height="13" fill="#000"/><rect x="6" y="2" width="1" height="12" fill="#d4ccc0"/><rect x="4" y="2" width="1" height="11" fill="#90002c"/><rect x="4" y="2" width="1" height="1" fill="#f028f0"/><rect x="4" y="4" width="1" height="1" fill="#a01098"/><rect x="4" y="6" width="1" height="1" fill="#a01098"/><rect x="4" y="8" width="1" height="1" fill="#a01098"/><rect x="4" y="10" width="1" height="1" fill="#a01098"/><rect x="4" y="12" width="1" height="1" fill="#a01098"/><rect x="7" y="3" width="3" height="11" fill="#000"/><rect x="10" y="4" width="1" height="10" fill="#d4ccc0"/><rect x="8" y="4" width="1" height="9" fill="#90002c"/><rect x="8" y="4" width="1" height="1" fill="#f028f0"/><rect x="8" y="6" width="1" height="1" fill="#a01098"/><rect x="8" y="8" width="1" height="1" fill="#a01098"/><rect x="8" y="10" width="1" height="1" fill="#a01098"/><rect x="8" y="12" width="1" height="1" fill="#a01098"/><rect x="11" y="2" width="3" height="12" fill="#000"/><rect x="14" y="3" width="1" height="11" fill="#d4ccc0"/><rect x="12" y="3" width="1" height="10" fill="#90002c"/><rect x="12" y="3" width="1" height="1" fill="#f028f0"/><rect x="12" y="5" width="1" height="1" fill="#a01098"/><rect x="12" y="7" width="1" height="1" fill="#a01098"/><rect x="12" y="9" width="1" height="1" fill="#a01098"/><rect x="12" y="11" width="1" height="1" fill="#a01098"/></g></svg></div><div class="wt" style="color:#d8e4f8;transform:scaleX(0.937)">Primo piano</div><div class="cb" style="left:673px;background:linear-gradient(135deg,#6f8fe6,#4d72e0 60%,#5a7ee4);border-color:#aabef0"><svg width="19" height="19" viewBox="0 0 19 19" ><rect x="4" y="12" width="7" height="3" fill="#fff"/></svg></div><div class="cb" style="left:696px;background:linear-gradient(135deg,#6f8fe6,#4d72e0 60%,#5a7ee4);border-color:#aabef0"><svg width="19" height="19" viewBox="0 0 19 19" ><g fill="none" stroke="#fff" shape-rendering="crispEdges"><rect x="4.500" y="4.500" width="10" height="10"/><path d="M4 5.500h11" stroke-width="3"/></g></svg></div><div class="cb" style="left:719px;background:linear-gradient(135deg,#c98a9a,#a8657c 60%,#b06a80);border-color:#d2b2c6"><svg width="19" height="19" viewBox="0 0 19 19" ><path d="M5 5l9.500 9.500M14.500 5l-9.500 9.500" stroke="#fff" stroke-width="2.100" stroke-linecap="round"/></svg></div><div class="inner" style="top:30px;width:738px;height:281px"><i style="width:736px;height:279px"></i></div></div>
<div class="win" style="top:451px;height:315px"><div class="tbar" style="background:linear-gradient(to bottom,#0048e0 1.67%,#3d95ff 5.00%,#1a7cfc 8.33%,#0463ec 11.67%,#005ae4 15.00%,#0056e2 18.33%,#0054e0 21.67%,#0054e0 25.00%,#0054e0 28.33%,#0054e0 31.67%,#0054e0 35.00%,#0054e0 38.33%,#0054e0 41.67%,#0054e0 45.00%,#0055e4 48.33%,#0057e8 51.67%,#0059ec 55.00%,#005cf0 58.33%,#005ff4 61.67%,#0062f8 65.00%,#0065fc 68.33%,#0068ff 71.67%,#0068ff 75.00%,#0068ff 78.33%,#0068ff 81.67%,#0068ff 85.00%,#0065fa 88.33%,#005cec 91.67%,#004cd8 95.00%,#0038c8 98.33%)"></div><div style="left:0;top:30px;width:4px;height:285px;background:linear-gradient(to right,#0024c8,#0a4ae8 40%,#0a4ae8 70%,#0436d4)"></div><div style="left:742px;top:30px;width:4px;height:285px;background:linear-gradient(to right,#0a44ea,#083ce0 45%,#0020b0 75%,#00138c)"></div><div style="left:0;top:311px;width:746px;height:4px;background:linear-gradient(to bottom,#0a44ea,#083ce0 45%,#0020b0 75%,#00138c)"></div><div style="left:0;top:311px;width:4px;height:4px;background:linear-gradient(to right,#0024c8,#0a4ae8 40%,#0a4ae8 70%,#0436d4);clip-path:polygon(0 0,100% 0,0 100%)"></div><div class="wi"><svg width="16" height="16" viewBox="0 0 16 16" ><g shape-rendering="crispEdges"><rect x="1" y="0" width="1" height="15" fill="#000"/><rect x="0" y="0" width="2" height="1" fill="#000"/><rect x="0" y="4" width="1" height="1" fill="#000"/><rect x="0" y="8" width="1" height="1" fill="#000"/><rect x="0" y="11" width="1" height="1" fill="#000"/><rect x="1" y="14" width="15" height="1" fill="#000"/><rect x="4" y="15" width="1" height="1" fill="#000"/><rect x="8" y="15" width="1" height="1" fill="#000"/><rect x="12" y="15" width="1" height="1" fill="#000"/><rect x="3" y="1" width="3" height="13" fill="#000"/><rect x="6" y="2" width="1" height="12" fill="#d4ccc0"/><rect x="4" y="2" width="1" height="11" fill="#90002c"/><rect x="4" y="2" width="1" height="1" fill="#f028f0"/><rect x="4" y="4" width="1" height="1" fill="#a01098"/><rect x="4" y="6" width="1" height="1" fill="#a01098"/><rect x="4" y="8" width="1" height="1" fill="#a01098"/><rect x="4" y="10" width="1" height="1" fill="#a01098"/><rect x="4" y="12" width="1" height="1" fill="#a01098"/><rect x="7" y="3" width="3" height="11" fill="#000"/><rect x="10" y="4" width="1" height="10" fill="#d4ccc0"/><rect x="8" y="4" width="1" height="9" fill="#90002c"/><rect x="8" y="4" width="1" height="1" fill="#f028f0"/><rect x="8" y="6" width="1" height="1" fill="#a01098"/><rect x="8" y="8" width="1" height="1" fill="#a01098"/><rect x="8" y="10" width="1" height="1" fill="#a01098"/><rect x="8" y="12" width="1" height="1" fill="#a01098"/><rect x="11" y="2" width="3" height="12" fill="#000"/><rect x="14" y="3" width="1" height="11" fill="#d4ccc0"/><rect x="12" y="3" width="1" height="10" fill="#90002c"/><rect x="12" y="3" width="1" height="1" fill="#f028f0"/><rect x="12" y="5" width="1" height="1" fill="#a01098"/><rect x="12" y="7" width="1" height="1" fill="#a01098"/><rect x="12" y="9" width="1" height="1" fill="#a01098"/><rect x="12" y="11" width="1" height="1" fill="#a01098"/></g></svg></div><div class="wt" style="color:#fff;text-shadow:1px 1px 0 #0a1883;transform:scaleX(0.976)">Piano terra</div><div class="cb" style="left:673px;background:radial-gradient(circle at 25% 20%,#5a8cf0 0%,#2a5ee6 45%,#1c48c8 100%);border-color:#fff"><svg width="19" height="19" viewBox="0 0 19 19" ><rect x="4" y="12" width="7" height="3" fill="#fff"/></svg></div><div class="cb" style="left:696px;background:radial-gradient(circle at 25% 20%,#5a8cf0 0%,#2a5ee6 45%,#1c48c8 100%);border-color:#fff"><svg width="19" height="19" viewBox="0 0 19 19" ><g fill="none" stroke="#fff" shape-rendering="crispEdges"><rect x="4.500" y="4.500" width="10" height="10"/><path d="M4 5.500h11" stroke-width="3"/></g></svg></div><div class="cb" style="left:719px;background:radial-gradient(circle at 25% 20%,#f0a088 0%,#e0502c 45%,#c03a18 100%);border-color:#fff"><svg width="19" height="19" viewBox="0 0 19 19" ><path d="M5 5l9.500 9.500M14.500 5l-9.500 9.500" stroke="#fff" stroke-width="2.100" stroke-linecap="round"/></svg></div><div class="inner" style="top:30px;width:738px;height:281px"><i style="width:736px;height:279px"></i></div></div>
<svg class="chart" style="left:282px;top:168px" width="734" height="277" viewBox="282 168 734 277"><path d="M325.5 218V386M421.5 218V386M517.5 218V386M613.5 218V386M708.5 218V386M804.5 218V386M900.5 218V386M996.5 218V386M325 218.5H997M325 301.5H997M325 385.5H997" stroke="#c8c8c8" fill="none" shape-rendering="crispEdges"/><path d="M361.5 343V386M365.5 343V386M361 343.5H366M361 385.5H366M361 379.5H366M361 371.5H366M361 363.5H366M361 355.5H366M361 347.5H366M365.5 301V386M369.5 301V386M365 301.5H370M365 385.5H370M365 379.5H370M365 371.5H370M365 363.5H370M365 355.5H370M365 347.5H370M365 339.5H370M365 331.5H370M365 323.5H370M365 315.5H370M365 307.5H370M369.5 301V386M373.5 301V386M369 301.5H374M369 385.5H374M369 379.5H374M369 371.5H374M369 363.5H374M369 355.5H374M369 347.5H374M369 339.5H374M369 331.5H374M369 323.5H374M369 315.5H374M369 307.5H374M373.5 260V386M377.5 260V386M373 260.5H378M373 385.5H378M373 379.5H378M373 371.5H378M373 363.5H378M373 355.5H378M373 347.5H378M373 339.5H378M373 331.5H378M373 323.5H378M373 315.5H378M373 307.5H378M373 299.5H378M373 291.5H378M373 283.5H378M373 275.5H378M373 267.5H378M377.5 301V386M381.5 301V386M377 301.5H382M377 385.5H382M377 379.5H382M377 371.5H382M377 363.5H382M377 355.5H382M377 347.5H382M377 339.5H382M377 331.5H382M377 323.5H382M377 315.5H382M377 307.5H382M381.5 260V386M385.5 260V386M381 260.5H386M381 385.5H386M381 379.5H386M381 371.5H386M381 363.5H386M381 355.5H386M381 347.5H386M381 339.5H386M381 331.5H386M381 323.5H386M381 315.5H386M381 307.5H386M381 299.5H386M381 291.5H386M381 283.5H386M381 275.5H386M381 267.5H386M385.5 260V386M389.5 260V386M385 260.5H390M385 385.5H390M385 379.5H390M385 371.5H390M385 363.5H390M385 355.5H390M385 347.5H390M385 339.5H390M385 331.5H390M385 323.5H390M385 315.5H390M385 307.5H390M385 299.5H390M385 291.5H390M385 283.5H390M385 275.5H390M385 267.5H390M389.5 260V386M393.5 260V386M389 260.5H394M389 385.5H394M389 379.5H394M389 371.5H394M389 363.5H394M389 355.5H394M389 347.5H394M389 339.5H394M389 331.5H394M389 323.5H394M389 315.5H394M389 307.5H394M389 299.5H394M389 291.5H394M389 283.5H394M389 275.5H394M389 267.5H394M393.5 218V386M397.5 218V386M393 218.5H398M393 385.5H398M393 379.5H398M393 371.5H398M393 363.5H398M393 355.5H398M393 347.5H398M393 339.5H398M393 331.5H398M393 323.5H398M393 315.5H398M393 307.5H398M393 299.5H398M393 291.5H398M393 283.5H398M393 275.5H398M393 267.5H398M393 259.5H398M393 251.5H398M393 243.5H398M393 235.5H398M393 227.5H398M393 219.5H398M397.5 301V386M401.5 301V386M397 301.5H402M397 385.5H402M397 379.5H402M397 371.5H402M397 363.5H402M397 355.5H402M397 347.5H402M397 339.5H402M397 331.5H402M397 323.5H402M397 315.5H402M397 307.5H402M401.5 301V386M405.5 301V386M401 301.5H406M401 385.5H406M401 379.5H406M401 371.5H406M401 363.5H406M401 355.5H406M401 347.5H406M401 339.5H406M401 331.5H406M401 323.5H406M401 315.5H406M401 307.5H406M409.5 343V386M413.5 343V386M409 343.5H414M409 385.5H414M409 379.5H414M409 371.5H414M409 363.5H414M409 355.5H414M409 347.5H414M413.5 343V386M417.5 343V386M413 343.5H418M413 385.5H418M413 379.5H418M413 371.5H418M413 363.5H418M413 355.5H418M413 347.5H418M417.5 343V386M421.5 343V386M417 343.5H422M417 385.5H422M417 379.5H422M417 371.5H422M417 363.5H422M417 355.5H422M417 347.5H422M421.5 343V386M425.5 343V386M421 343.5H426M421 385.5H426M421 379.5H426M421 371.5H426M421 363.5H426M421 355.5H426M421 347.5H426M425.5 343V386M429.5 343V386M425 343.5H430M425 385.5H430M425 379.5H430M425 371.5H430M425 363.5H430M425 355.5H430M425 347.5H430M433.5 343V386M437.5 343V386M433 343.5H438M433 385.5H438M433 379.5H438M433 371.5H438M433 363.5H438M433 355.5H438M433 347.5H438M437.5 343V386M441.5 343V386M437 343.5H442M437 385.5H442M437 379.5H442M437 371.5H442M437 363.5H442M437 355.5H442M437 347.5H442M441.5 343V386M445.5 343V386M441 343.5H446M441 385.5H446M441 379.5H446M441 371.5H446M441 363.5H446M441 355.5H446M441 347.5H446M465.5 343V386M469.5 343V386M465 343.5H470M465 385.5H470M465 379.5H470M465 371.5H470M465 363.5H470M465 355.5H470M465 347.5H470M469.5 301V386M473.5 301V386M469 301.5H474M469 385.5H474M469 379.5H474M469 371.5H474M469 363.5H474M469 355.5H474M469 347.5H474M469 339.5H474M469 331.5H474M469 323.5H474M469 315.5H474M469 307.5H474M473.5 301V386M477.5 301V386M473 301.5H478M473 385.5H478M473 379.5H478M473 371.5H478M473 363.5H478M473 355.5H478M473 347.5H478M473 339.5H478M473 331.5H478M473 323.5H478M473 315.5H478M473 307.5H478M477.5 301V386M481.5 301V386M477 301.5H482M477 385.5H482M477 379.5H482M477 371.5H482M477 363.5H482M477 355.5H482M477 347.5H482M477 339.5H482M477 331.5H482M477 323.5H482M477 315.5H482M477 307.5H482M481.5 260V386M485.5 260V386M481 260.5H486M481 385.5H486M481 379.5H486M481 371.5H486M481 363.5H486M481 355.5H486M481 347.5H486M481 339.5H486M481 331.5H486M481 323.5H486M481 315.5H486M481 307.5H486M481 299.5H486M481 291.5H486M481 283.5H486M481 275.5H486M481 267.5H486M485.5 301V386M489.5 301V386M485 301.5H490M485 385.5H490M485 379.5H490M485 371.5H490M485 363.5H490M485 355.5H490M485 347.5H490M485 339.5H490M485 331.5H490M485 323.5H490M485 315.5H490M485 307.5H490M489.5 260V386M493.5 260V386M489 260.5H494M489 385.5H494M489 379.5H494M489 371.5H494M489 363.5H494M489 355.5H494M489 347.5H494M489 339.5H494M489 331.5H494M489 323.5H494M489 315.5H494M489 307.5H494M489 299.5H494M489 291.5H494M489 283.5H494M489 275.5H494M489 267.5H494M493.5 301V386M497.5 301V386M493 301.5H498M493 385.5H498M493 379.5H498M493 371.5H498M493 363.5H498M493 355.5H498M493 347.5H498M493 339.5H498M493 331.5H498M493 323.5H498M493 315.5H498M493 307.5H498M497.5 343V386M501.5 343V386M497 343.5H502M497 385.5H502M497 379.5H502M497 371.5H502M497 363.5H502M497 355.5H502M497 347.5H502M501.5 343V386M505.5 343V386M501 343.5H506M501 385.5H506M501 379.5H506M501 371.5H506M501 363.5H506M501 355.5H506M501 347.5H506M505.5 343V386M509.5 343V386M505 343.5H510M505 385.5H510M505 379.5H510M505 371.5H510M505 363.5H510M505 355.5H510M505 347.5H510M509.5 343V386M513.5 343V386M509 343.5H514M509 385.5H514M509 379.5H514M509 371.5H514M509 363.5H514M509 355.5H514M509 347.5H514M513.5 343V386M517.5 343V386M513 343.5H518M513 385.5H518M513 379.5H518M513 371.5H518M513 363.5H518M513 355.5H518M513 347.5H518M521.5 343V386M525.5 343V386M521 343.5H526M521 385.5H526M521 379.5H526M521 371.5H526M521 363.5H526M521 355.5H526M521 347.5H526M525.5 343V386M529.5 343V386M525 343.5H530M525 385.5H530M525 379.5H530M525 371.5H530M525 363.5H530M525 355.5H530M525 347.5H530M529.5 343V386M533.5 343V386M529 343.5H534M529 385.5H534M529 379.5H534M529 371.5H534M529 363.5H534M529 355.5H534M529 347.5H534M533.5 343V386M537.5 343V386M533 343.5H538M533 385.5H538M533 379.5H538M533 371.5H538M533 363.5H538M533 355.5H538M533 347.5H538M541.5 343V386M545.5 343V386M541 343.5H546M541 385.5H546M541 379.5H546M541 371.5H546M541 363.5H546M541 355.5H546M541 347.5H546M545.5 301V386M549.5 301V386M545 301.5H550M545 385.5H550M545 379.5H550M545 371.5H550M545 363.5H550M545 355.5H550M545 347.5H550M545 339.5H550M545 331.5H550M545 323.5H550M545 315.5H550M545 307.5H550M549.5 301V386M553.5 301V386M549 301.5H554M549 385.5H554M549 379.5H554M549 371.5H554M549 363.5H554M549 355.5H554M549 347.5H554M549 339.5H554M549 331.5H554M549 323.5H554M549 315.5H554M549 307.5H554M553.5 260V386M557.5 260V386M553 260.5H558M553 385.5H558M553 379.5H558M553 371.5H558M553 363.5H558M553 355.5H558M553 347.5H558M553 339.5H558M553 331.5H558M553 323.5H558M553 315.5H558M553 307.5H558M553 299.5H558M553 291.5H558M553 283.5H558M553 275.5H558M553 267.5H558M557.5 301V386M561.5 301V386M557 301.5H562M557 385.5H562M557 379.5H562M557 371.5H562M557 363.5H562M557 355.5H562M557 347.5H562M557 339.5H562M557 331.5H562M557 323.5H562M557 315.5H562M557 307.5H562M561.5 260V386M565.5 260V386M561 260.5H566M561 385.5H566M561 379.5H566M561 371.5H566M561 363.5H566M561 355.5H566M561 347.5H566M561 339.5H566M561 331.5H566M561 323.5H566M561 315.5H566M561 307.5H566M561 299.5H566M561 291.5H566M561 283.5H566M561 275.5H566M561 267.5H566M565.5 301V386M569.5 301V386M565 301.5H570M565 385.5H570M565 379.5H570M565 371.5H570M565 363.5H570M565 355.5H570M565 347.5H570M565 339.5H570M565 331.5H570M565 323.5H570M565 315.5H570M565 307.5H570M569.5 301V386M573.5 301V386M569 301.5H574M569 385.5H574M569 379.5H574M569 371.5H574M569 363.5H574M569 355.5H574M569 347.5H574M569 339.5H574M569 331.5H574M569 323.5H574M569 315.5H574M569 307.5H574M573.5 301V386M577.5 301V386M573 301.5H578M573 385.5H578M573 379.5H578M573 371.5H578M573 363.5H578M573 355.5H578M573 347.5H578M573 339.5H578M573 331.5H578M573 323.5H578M573 315.5H578M573 307.5H578M577.5 301V386M581.5 301V386M577 301.5H582M577 385.5H582M577 379.5H582M577 371.5H582M577 363.5H582M577 355.5H582M577 347.5H582M577 339.5H582M577 331.5H582M577 323.5H582M577 315.5H582M577 307.5H582M581.5 301V386M585.5 301V386M581 301.5H586M581 385.5H586M581 379.5H586M581 371.5H586M581 363.5H586M581 355.5H586M581 347.5H586M581 339.5H586M581 331.5H586M581 323.5H586M581 315.5H586M581 307.5H586M585.5 218V386M589.5 218V386M585 218.5H590M585 385.5H590M585 379.5H590M585 371.5H590M585 363.5H590M585 355.5H590M585 347.5H590M585 339.5H590M585 331.5H590M585 323.5H590M585 315.5H590M585 307.5H590M585 299.5H590M585 291.5H590M585 283.5H590M585 275.5H590M585 267.5H590M585 259.5H590M585 251.5H590M585 243.5H590M585 235.5H590M585 227.5H590M585 219.5H590M589.5 343V386M593.5 343V386M589 343.5H594M589 385.5H594M589 379.5H594M589 371.5H594M589 363.5H594M589 355.5H594M589 347.5H594M593.5 301V386M597.5 301V386M593 301.5H598M593 385.5H598M593 379.5H598M593 371.5H598M593 363.5H598M593 355.5H598M593 347.5H598M593 339.5H598M593 331.5H598M593 323.5H598M593 315.5H598M593 307.5H598M597.5 343V386M601.5 343V386M597 343.5H602M597 385.5H602M597 379.5H602M597 371.5H602M597 363.5H602M597 355.5H602M597 347.5H602M601.5 343V386M605.5 343V386M601 343.5H606M601 385.5H606M601 379.5H606M601 371.5H606M601 363.5H606M601 355.5H606M601 347.5H606M605.5 343V386M609.5 343V386M605 343.5H610M605 385.5H610M605 379.5H610M605 371.5H610M605 363.5H610M605 355.5H610M605 347.5H610M609.5 343V386M613.5 343V386M609 343.5H614M609 385.5H614M609 379.5H614M609 371.5H614M609 363.5H614M609 355.5H614M609 347.5H614M613.5 343V386M617.5 343V386M613 343.5H618M613 385.5H618M613 379.5H618M613 371.5H618M613 363.5H618M613 355.5H618M613 347.5H618M621.5 343V386M625.5 343V386M621 343.5H626M621 385.5H626M621 379.5H626M621 371.5H626M621 363.5H626M621 355.5H626M621 347.5H626M625.5 343V386M629.5 343V386M625 343.5H630M625 385.5H630M625 379.5H630M625 371.5H630M625 363.5H630M625 355.5H630M625 347.5H630M629.5 343V386M633.5 343V386M629 343.5H634M629 385.5H634M629 379.5H634M629 371.5H634M629 363.5H634M629 355.5H634M629 347.5H634M633.5 343V386M637.5 343V386M633 343.5H638M633 385.5H638M633 379.5H638M633 371.5H638M633 363.5H638M633 355.5H638M633 347.5H638M637.5 343V386M641.5 343V386M637 343.5H642M637 385.5H642M637 379.5H642M637 371.5H642M637 363.5H642M637 355.5H642M637 347.5H642M641.5 301V386M645.5 301V386M641 301.5H646M641 385.5H646M641 379.5H646M641 371.5H646M641 363.5H646M641 355.5H646M641 347.5H646M641 339.5H646M641 331.5H646M641 323.5H646M641 315.5H646M641 307.5H646M645.5 301V386M649.5 301V386M645 301.5H650M645 385.5H650M645 379.5H650M645 371.5H650M645 363.5H650M645 355.5H650M645 347.5H650M645 339.5H650M645 331.5H650M645 323.5H650M645 315.5H650M645 307.5H650M649.5 301V386M653.5 301V386M649 301.5H654M649 385.5H654M649 379.5H654M649 371.5H654M649 363.5H654M649 355.5H654M649 347.5H654M649 339.5H654M649 331.5H654M649 323.5H654M649 315.5H654M649 307.5H654M653.5 301V386M657.5 301V386M653 301.5H658M653 385.5H658M653 379.5H658M653 371.5H658M653 363.5H658M653 355.5H658M653 347.5H658M653 339.5H658M653 331.5H658M653 323.5H658M653 315.5H658M653 307.5H658M657.5 260V386M661.5 260V386M657 260.5H662M657 385.5H662M657 379.5H662M657 371.5H662M657 363.5H662M657 355.5H662M657 347.5H662M657 339.5H662M657 331.5H662M657 323.5H662M657 315.5H662M657 307.5H662M657 299.5H662M657 291.5H662M657 283.5H662M657 275.5H662M657 267.5H662M661.5 301V386M664.5 301V386M661 301.5H665M661 385.5H665M661 379.5H665M661 371.5H665M661 363.5H665M661 355.5H665M661 347.5H665M661 339.5H665M661 331.5H665M661 323.5H665M661 315.5H665M661 307.5H665M664.5 301V386M668.5 301V386M664 301.5H669M664 385.5H669M664 379.5H669M664 371.5H669M664 363.5H669M664 355.5H669M664 347.5H669M664 339.5H669M664 331.5H669M664 323.5H669M664 315.5H669M664 307.5H669M668.5 301V386M672.5 301V386M668 301.5H673M668 385.5H673M668 379.5H673M668 371.5H673M668 363.5H673M668 355.5H673M668 347.5H673M668 339.5H673M668 331.5H673M668 323.5H673M668 315.5H673M668 307.5H673M672.5 301V386M676.5 301V386M672 301.5H677M672 385.5H677M672 379.5H677M672 371.5H677M672 363.5H677M672 355.5H677M672 347.5H677M672 339.5H677M672 331.5H677M672 323.5H677M672 315.5H677M672 307.5H677M676.5 301V386M680.5 301V386M676 301.5H681M676 385.5H681M676 379.5H681M676 371.5H681M676 363.5H681M676 355.5H681M676 347.5H681M676 339.5H681M676 331.5H681M676 323.5H681M676 315.5H681M676 307.5H681M680.5 260V386M684.5 260V386M680 260.5H685M680 385.5H685M680 379.5H685M680 371.5H685M680 363.5H685M680 355.5H685M680 347.5H685M680 339.5H685M680 331.5H685M680 323.5H685M680 315.5H685M680 307.5H685M680 299.5H685M680 291.5H685M680 283.5H685M680 275.5H685M680 267.5H685M684.5 343V386M688.5 343V386M684 343.5H689M684 385.5H689M684 379.5H689M684 371.5H689M684 363.5H689M684 355.5H689M684 347.5H689M688.5 301V386M692.5 301V386M688 301.5H693M688 385.5H693M688 379.5H693M688 371.5H693M688 363.5H693M688 355.5H693M688 347.5H693M688 339.5H693M688 331.5H693M688 323.5H693M688 315.5H693M688 307.5H693M696.5 343V386M700.5 343V386M696 343.5H701M696 385.5H701M696 379.5H701M696 371.5H701M696 363.5H701M696 355.5H701M696 347.5H701M700.5 343V386M704.5 343V386M700 343.5H705M700 385.5H705M700 379.5H705M700 371.5H705M700 363.5H705M700 355.5H705M700 347.5H705M704.5 343V386M708.5 343V386M704 343.5H709M704 385.5H709M704 379.5H709M704 371.5H709M704 363.5H709M704 355.5H709M704 347.5H709M708.5 343V386M712.5 343V386M708 343.5H713M708 385.5H713M708 379.5H713M708 371.5H713M708 363.5H713M708 355.5H713M708 347.5H713M712.5 343V386M716.5 343V386M712 343.5H717M712 385.5H717M712 379.5H717M712 371.5H717M712 363.5H717M712 355.5H717M712 347.5H717M720.5 343V386M724.5 343V386M720 343.5H725M720 385.5H725M720 379.5H725M720 371.5H725M720 363.5H725M720 355.5H725M720 347.5H725M724.5 343V386M728.5 343V386M724 343.5H729M724 385.5H729M724 379.5H729M724 371.5H729M724 363.5H729M724 355.5H729M724 347.5H729M728.5 343V386M732.5 343V386M728 343.5H733M728 385.5H733M728 379.5H733M728 371.5H733M728 363.5H733M728 355.5H733M728 347.5H733M732.5 343V386M736.5 343V386M732 343.5H737M732 385.5H737M732 379.5H737M732 371.5H737M732 363.5H737M732 355.5H737M732 347.5H737M736.5 343V386M740.5 343V386M736 343.5H741M736 385.5H741M736 379.5H741M736 371.5H741M736 363.5H741M736 355.5H741M736 347.5H741M740.5 301V386M744.5 301V386M740 301.5H745M740 385.5H745M740 379.5H745M740 371.5H745M740 363.5H745M740 355.5H745M740 347.5H745M740 339.5H745M740 331.5H745M740 323.5H745M740 315.5H745M740 307.5H745M744.5 260V386M748.5 260V386M744 260.5H749M744 385.5H749M744 379.5H749M744 371.5H749M744 363.5H749M744 355.5H749M744 347.5H749M744 339.5H749M744 331.5H749M744 323.5H749M744 315.5H749M744 307.5H749M744 299.5H749M744 291.5H749M744 283.5H749M744 275.5H749M744 267.5H749M748.5 301V386M752.5 301V386M748 301.5H753M748 385.5H753M748 379.5H753M748 371.5H753M748 363.5H753M748 355.5H753M748 347.5H753M748 339.5H753M748 331.5H753M748 323.5H753M748 315.5H753M748 307.5H753M752.5 301V386M756.5 301V386M752 301.5H757M752 385.5H757M752 379.5H757M752 371.5H757M752 363.5H757M752 355.5H757M752 347.5H757M752 339.5H757M752 331.5H757M752 323.5H757M752 315.5H757M752 307.5H757M756.5 260V386M760.5 260V386M756 260.5H761M756 385.5H761M756 379.5H761M756 371.5H761M756 363.5H761M756 355.5H761M756 347.5H761M756 339.5H761M756 331.5H761M756 323.5H761M756 315.5H761M756 307.5H761M756 299.5H761M756 291.5H761M756 283.5H761M756 275.5H761M756 267.5H761M760.5 301V386M764.5 301V386M760 301.5H765M760 385.5H765M760 379.5H765M760 371.5H765M760 363.5H765M760 355.5H765M760 347.5H765M760 339.5H765M760 331.5H765M760 323.5H765M760 315.5H765M760 307.5H765M764.5 343V386M768.5 343V386M764 343.5H769M764 385.5H769M764 379.5H769M764 371.5H769M764 363.5H769M764 355.5H769M764 347.5H769M768.5 301V386M772.5 301V386M768 301.5H773M768 385.5H773M768 379.5H773M768 371.5H773M768 363.5H773M768 355.5H773M768 347.5H773M768 339.5H773M768 331.5H773M768 323.5H773M768 315.5H773M768 307.5H773M772.5 301V386M776.5 301V386M772 301.5H777M772 385.5H777M772 379.5H777M772 371.5H777M772 363.5H777M772 355.5H777M772 347.5H777M772 339.5H777M772 331.5H777M772 323.5H777M772 315.5H777M772 307.5H777" stroke="#000080" fill="none" shape-rendering="crispEdges"/><path d="M321.5 218V386M318 218.5H322M318 301.5H322M318 385.5H322" stroke="#000080" fill="none" shape-rendering="crispEdges"/><path d="M325 389.5H997M325.5 389V394M421.5 389V394M517.5 389V394M613.5 389V394M708.5 389V394M804.5 389V394M900.5 389V394M996.5 389V394" stroke="#000" fill="none" shape-rendering="crispEdges"/><text x="316.5" y="222" text-anchor="end" class="ax">+4.000</text><text x="316.5" y="305" text-anchor="end" class="ax">+2.000</text><text x="316.5" y="389" text-anchor="end" class="ax">0.000</text><text x="325" y="404" text-anchor="middle" class="ax">lun 07/02</text><text x="421" y="404" text-anchor="middle" class="ax">mar 08/02</text><text x="517" y="404" text-anchor="middle" class="ax">mer 09/02</text><text x="613" y="404" text-anchor="middle" class="ax">gio 10/02</text><text x="708" y="404" text-anchor="middle" class="ax">ven 11/02</text><text x="804" y="404" text-anchor="middle" class="ax">sab 12/02</text><text x="900" y="404" text-anchor="middle" class="ax">dom 13/02</text><text x="996" y="404" text-anchor="middle" class="ax">lun 14/02</text><text x="661.5" y="200" text-anchor="middle" class="ttl">Primo piano</text><text x="660.5" y="427" text-anchor="middle" class="wk">7° Week 2005</text><text x="1003.5" y="433" text-anchor="end" class="inf">dom 06/02 ; +1.940</text><text transform="translate(328 215) rotate(-45)" class="unit">kWh</text></svg>
<svg class="chart" style="left:282px;top:483px" width="734" height="277" viewBox="282 483 734 277"><path d="M325.5 533V701M421.5 533V701M517.5 533V701M613.5 533V701M708.5 533V701M804.5 533V701M900.5 533V701M996.5 533V701M325 533.5H997M325 572.5H997M325 636.5H997M325 700.5H997" stroke="#c8c8c8" fill="none" shape-rendering="crispEdges"/><path d="M365.5 597V701M369.5 597V701M365 597.5H370M365 700.5H370M365 694.5H370M365 686.5H370M365 678.5H370M365 670.5H370M365 662.5H370M365 654.5H370M365 646.5H370M365 638.5H370M365 630.5H370M365 622.5H370M365 614.5H370M365 606.5H370M365 598.5H370M369.5 546V701M373.5 546V701M369 546.5H374M369 700.5H374M369 694.5H374M369 686.5H374M369 678.5H374M369 670.5H374M369 662.5H374M369 654.5H374M369 646.5H374M369 638.5H374M369 630.5H374M369 622.5H374M369 614.5H374M369 606.5H374M369 598.5H374M369 590.5H374M369 582.5H374M369 574.5H374M369 566.5H374M369 558.5H374M369 550.5H374M373.5 559V701M377.5 559V701M373 559.5H378M373 700.5H378M373 694.5H378M373 686.5H378M373 678.5H378M373 670.5H378M373 662.5H378M373 654.5H378M373 646.5H378M373 638.5H378M373 630.5H378M373 622.5H378M373 614.5H378M373 606.5H378M373 598.5H378M373 590.5H378M373 582.5H378M373 574.5H378M373 566.5H378M377.5 584V701M381.5 584V701M377 584.5H382M377 700.5H382M377 694.5H382M377 686.5H382M377 678.5H382M377 670.5H382M377 662.5H382M377 654.5H382M377 646.5H382M377 638.5H382M377 630.5H382M377 622.5H382M377 614.5H382M377 606.5H382M377 598.5H382M377 590.5H382M381.5 572V701M385.5 572V701M381 572.5H386M381 700.5H386M381 694.5H386M381 686.5H386M381 678.5H386M381 670.5H386M381 662.5H386M381 654.5H386M381 646.5H386M381 638.5H386M381 630.5H386M381 622.5H386M381 614.5H386M381 606.5H386M381 598.5H386M381 590.5H386M381 582.5H386M381 574.5H386M385.5 584V701M389.5 584V701M385 584.5H390M385 700.5H390M385 694.5H390M385 686.5H390M385 678.5H390M385 670.5H390M385 662.5H390M385 654.5H390M385 646.5H390M385 638.5H390M385 630.5H390M385 622.5H390M385 614.5H390M385 606.5H390M385 598.5H390M385 590.5H390M389.5 584V701M393.5 584V701M389 584.5H394M389 700.5H394M389 694.5H394M389 686.5H394M389 678.5H394M389 670.5H394M389 662.5H394M389 654.5H394M389 646.5H394M389 638.5H394M389 630.5H394M389 622.5H394M389 614.5H394M389 606.5H394M389 598.5H394M389 590.5H394M393.5 623V701M397.5 623V701M393 623.5H398M393 700.5H398M393 694.5H398M393 686.5H398M393 678.5H398M393 670.5H398M393 662.5H398M393 654.5H398M393 646.5H398M393 638.5H398M393 630.5H398M461.5 661V701M465.5 661V701M461 661.5H466M461 700.5H466M461 694.5H466M461 686.5H466M461 678.5H466M461 670.5H466M461 662.5H466M465.5 572V701M469.5 572V701M465 572.5H470M465 700.5H470M465 694.5H470M465 686.5H470M465 678.5H470M465 670.5H470M465 662.5H470M465 654.5H470M465 646.5H470M465 638.5H470M465 630.5H470M465 622.5H470M465 614.5H470M465 606.5H470M465 598.5H470M465 590.5H470M465 582.5H470M465 574.5H470M469.5 584V701M473.5 584V701M469 584.5H474M469 700.5H474M469 694.5H474M469 686.5H474M469 678.5H474M469 670.5H474M469 662.5H474M469 654.5H474M469 646.5H474M469 638.5H474M469 630.5H474M469 622.5H474M469 614.5H474M469 606.5H474M469 598.5H474M469 590.5H474M473.5 610V701M477.5 610V701M473 610.5H478M473 700.5H478M473 694.5H478M473 686.5H478M473 678.5H478M473 670.5H478M473 662.5H478M473 654.5H478M473 646.5H478M473 638.5H478M473 630.5H478M473 622.5H478M473 614.5H478M477.5 584V701M481.5 584V701M477 584.5H482M477 700.5H482M477 694.5H482M477 686.5H482M477 678.5H482M477 670.5H482M477 662.5H482M477 654.5H482M477 646.5H482M477 638.5H482M477 630.5H482M477 622.5H482M477 614.5H482M477 606.5H482M477 598.5H482M477 590.5H482M481.5 597V701M485.5 597V701M481 597.5H486M481 700.5H486M481 694.5H486M481 686.5H486M481 678.5H486M481 670.5H486M481 662.5H486M481 654.5H486M481 646.5H486M481 638.5H486M481 630.5H486M481 622.5H486M481 614.5H486M481 606.5H486M481 598.5H486M485.5 584V701M489.5 584V701M485 584.5H490M485 700.5H490M485 694.5H490M485 686.5H490M485 678.5H490M485 670.5H490M485 662.5H490M485 654.5H490M485 646.5H490M485 638.5H490M485 630.5H490M485 622.5H490M485 614.5H490M485 606.5H490M485 598.5H490M485 590.5H490M489.5 533V701M493.5 533V701M489 533.5H494M489 700.5H494M489 694.5H494M489 686.5H494M489 678.5H494M489 670.5H494M489 662.5H494M489 654.5H494M489 646.5H494M489 638.5H494M489 630.5H494M489 622.5H494M489 614.5H494M489 606.5H494M489 598.5H494M489 590.5H494M489 582.5H494M489 574.5H494M489 566.5H494M489 558.5H494M489 550.5H494M489 542.5H494M489 534.5H494M493.5 584V701M497.5 584V701M493 584.5H498M493 700.5H498M493 694.5H498M493 686.5H498M493 678.5H498M493 670.5H498M493 662.5H498M493 654.5H498M493 646.5H498M493 638.5H498M493 630.5H498M493 622.5H498M493 614.5H498M493 606.5H498M493 598.5H498M493 590.5H498M497.5 636V701M501.5 636V701M497 636.5H502M497 700.5H502M497 694.5H502M497 686.5H502M497 678.5H502M497 670.5H502M497 662.5H502M497 654.5H502M497 646.5H502M497 638.5H502M501.5 649V701M505.5 649V701M501 649.5H506M501 700.5H506M501 694.5H506M501 686.5H506M501 678.5H506M501 670.5H506M501 662.5H506M501 654.5H506M505.5 649V701M509.5 649V701M505 649.5H510M505 700.5H510M505 694.5H510M505 686.5H510M505 678.5H510M505 670.5H510M505 662.5H510M505 654.5H510M509.5 649V701M513.5 649V701M509 649.5H514M509 700.5H514M509 694.5H514M509 686.5H514M509 678.5H514M509 670.5H514M509 662.5H514M509 654.5H514M513.5 649V701M517.5 649V701M513 649.5H518M513 700.5H518M513 694.5H518M513 686.5H518M513 678.5H518M513 670.5H518M513 662.5H518M513 654.5H518M517.5 649V701M521.5 649V701M517 649.5H522M517 700.5H522M517 694.5H522M517 686.5H522M517 678.5H522M517 670.5H522M517 662.5H522M517 654.5H522M521.5 649V701M525.5 649V701M521 649.5H526M521 700.5H526M521 694.5H526M521 686.5H526M521 678.5H526M521 670.5H526M521 662.5H526M521 654.5H526M525.5 649V701M529.5 649V701M525 649.5H530M525 700.5H530M525 694.5H530M525 686.5H530M525 678.5H530M525 670.5H530M525 662.5H530M525 654.5H530M529.5 649V701M533.5 649V701M529 649.5H534M529 700.5H534M529 694.5H534M529 686.5H534M529 678.5H534M529 670.5H534M529 662.5H534M529 654.5H534M533.5 649V701M537.5 649V701M533 649.5H538M533 700.5H538M533 694.5H538M533 686.5H538M533 678.5H538M533 670.5H538M533 662.5H538M533 654.5H538M537.5 649V701M541.5 649V701M537 649.5H542M537 700.5H542M537 694.5H542M537 686.5H542M537 678.5H542M537 670.5H542M537 662.5H542M537 654.5H542M541.5 649V701M545.5 649V701M541 649.5H546M541 700.5H546M541 694.5H546M541 686.5H546M541 678.5H546M541 670.5H546M541 662.5H546M541 654.5H546M545.5 636V701M549.5 636V701M545 636.5H550M545 700.5H550M545 694.5H550M545 686.5H550M545 678.5H550M545 670.5H550M545 662.5H550M545 654.5H550M545 646.5H550M545 638.5H550M549.5 584V701M553.5 584V701M549 584.5H554M549 700.5H554M549 694.5H554M549 686.5H554M549 678.5H554M549 670.5H554M549 662.5H554M549 654.5H554M549 646.5H554M549 638.5H554M549 630.5H554M549 622.5H554M549 614.5H554M549 606.5H554M549 598.5H554M549 590.5H554M553.5 584V701M557.5 584V701M553 584.5H558M553 700.5H558M553 694.5H558M553 686.5H558M553 678.5H558M553 670.5H558M553 662.5H558M553 654.5H558M553 646.5H558M553 638.5H558M553 630.5H558M553 622.5H558M553 614.5H558M553 606.5H558M553 598.5H558M553 590.5H558M557.5 597V701M561.5 597V701M557 597.5H562M557 700.5H562M557 694.5H562M557 686.5H562M557 678.5H562M557 670.5H562M557 662.5H562M557 654.5H562M557 646.5H562M557 638.5H562M557 630.5H562M557 622.5H562M557 614.5H562M557 606.5H562M557 598.5H562M561.5 597V701M565.5 597V701M561 597.5H566M561 700.5H566M561 694.5H566M561 686.5H566M561 678.5H566M561 670.5H566M561 662.5H566M561 654.5H566M561 646.5H566M561 638.5H566M561 630.5H566M561 622.5H566M561 614.5H566M561 606.5H566M561 598.5H566M565.5 610V701M569.5 610V701M565 610.5H570M565 700.5H570M565 694.5H570M565 686.5H570M565 678.5H570M565 670.5H570M565 662.5H570M565 654.5H570M565 646.5H570M565 638.5H570M565 630.5H570M565 622.5H570M565 614.5H570M569.5 610V701M573.5 610V701M569 610.5H574M569 700.5H574M569 694.5H574M569 686.5H574M569 678.5H574M569 670.5H574M569 662.5H574M569 654.5H574M569 646.5H574M569 638.5H574M569 630.5H574M569 622.5H574M569 614.5H574M573.5 610V701M577.5 610V701M573 610.5H578M573 700.5H578M573 694.5H578M573 686.5H578M573 678.5H578M573 670.5H578M573 662.5H578M573 654.5H578M573 646.5H578M573 638.5H578M573 630.5H578M573 622.5H578M573 614.5H578M577.5 610V701M581.5 610V701M577 610.5H582M577 700.5H582M577 694.5H582M577 686.5H582M577 678.5H582M577 670.5H582M577 662.5H582M577 654.5H582M577 646.5H582M577 638.5H582M577 630.5H582M577 622.5H582M577 614.5H582M581.5 610V701M585.5 610V701M581 610.5H586M581 700.5H586M581 694.5H586M581 686.5H586M581 678.5H586M581 670.5H586M581 662.5H586M581 654.5H586M581 646.5H586M581 638.5H586M581 630.5H586M581 622.5H586M581 614.5H586M585.5 572V701M589.5 572V701M585 572.5H590M585 700.5H590M585 694.5H590M585 686.5H590M585 678.5H590M585 670.5H590M585 662.5H590M585 654.5H590M585 646.5H590M585 638.5H590M585 630.5H590M585 622.5H590M585 614.5H590M585 606.5H590M585 598.5H590M585 590.5H590M585 582.5H590M585 574.5H590M589.5 584V701M593.5 584V701M589 584.5H594M589 700.5H594M589 694.5H594M589 686.5H594M589 678.5H594M589 670.5H594M589 662.5H594M589 654.5H594M589 646.5H594M589 638.5H594M589 630.5H594M589 622.5H594M589 614.5H594M589 606.5H594M589 598.5H594M589 590.5H594M593.5 623V701M597.5 623V701M593 623.5H598M593 700.5H598M593 694.5H598M593 686.5H598M593 678.5H598M593 670.5H598M593 662.5H598M593 654.5H598M593 646.5H598M593 638.5H598M593 630.5H598M597.5 661V701M601.5 661V701M597 661.5H602M597 700.5H602M597 694.5H602M597 686.5H602M597 678.5H602M597 670.5H602M597 662.5H602M601.5 661V701M605.5 661V701M601 661.5H606M601 700.5H606M601 694.5H606M601 686.5H606M601 678.5H606M601 670.5H606M601 662.5H606M605.5 674V701M609.5 674V701M605 674.5H610M605 700.5H610M605 694.5H610M605 686.5H610M605 678.5H610M609.5 661V701M613.5 661V701M609 661.5H614M609 700.5H614M609 694.5H614M609 686.5H614M609 678.5H614M609 670.5H614M609 662.5H614M613.5 661V701M617.5 661V701M613 661.5H618M613 700.5H618M613 694.5H618M613 686.5H618M613 678.5H618M613 670.5H618M613 662.5H618M617.5 661V701M621.5 661V701M617 661.5H622M617 700.5H622M617 694.5H622M617 686.5H622M617 678.5H622M617 670.5H622M617 662.5H622M621.5 661V701M625.5 661V701M621 661.5H626M621 700.5H626M621 694.5H626M621 686.5H626M621 678.5H626M621 670.5H626M621 662.5H626M625.5 674V701M629.5 674V701M625 674.5H630M625 700.5H630M625 694.5H630M625 686.5H630M625 678.5H630M629.5 661V701M633.5 661V701M629 661.5H634M629 700.5H634M629 694.5H634M629 686.5H634M629 678.5H634M629 670.5H634M629 662.5H634M633.5 661V701M637.5 661V701M633 661.5H638M633 700.5H638M633 694.5H638M633 686.5H638M633 678.5H638M633 670.5H638M633 662.5H638M637.5 661V701M641.5 661V701M637 661.5H642M637 700.5H642M637 694.5H642M637 686.5H642M637 678.5H642M637 670.5H642M637 662.5H642M641.5 623V701M645.5 623V701M641 623.5H646M641 700.5H646M641 694.5H646M641 686.5H646M641 678.5H646M641 670.5H646M641 662.5H646M641 654.5H646M641 646.5H646M641 638.5H646M641 630.5H646M645.5 559V701M649.5 559V701M645 559.5H650M645 700.5H650M645 694.5H650M645 686.5H650M645 678.5H650M645 670.5H650M645 662.5H650M645 654.5H650M645 646.5H650M645 638.5H650M645 630.5H650M645 622.5H650M645 614.5H650M645 606.5H650M645 598.5H650M645 590.5H650M645 582.5H650M645 574.5H650M645 566.5H650M649.5 572V701M653.5 572V701M649 572.5H654M649 700.5H654M649 694.5H654M649 686.5H654M649 678.5H654M649 670.5H654M649 662.5H654M649 654.5H654M649 646.5H654M649 638.5H654M649 630.5H654M649 622.5H654M649 614.5H654M649 606.5H654M649 598.5H654M649 590.5H654M649 582.5H654M649 574.5H654M653.5 584V701M657.5 584V701M653 584.5H658M653 700.5H658M653 694.5H658M653 686.5H658M653 678.5H658M653 670.5H658M653 662.5H658M653 654.5H658M653 646.5H658M653 638.5H658M653 630.5H658M653 622.5H658M653 614.5H658M653 606.5H658M653 598.5H658M653 590.5H658M657.5 572V701M661.5 572V701M657 572.5H662M657 700.5H662M657 694.5H662M657 686.5H662M657 678.5H662M657 670.5H662M657 662.5H662M657 654.5H662M657 646.5H662M657 638.5H662M657 630.5H662M657 622.5H662M657 614.5H662M657 606.5H662M657 598.5H662M657 590.5H662M657 582.5H662M657 574.5H662M661.5 597V701M664.5 597V701M661 597.5H665M661 700.5H665M661 694.5H665M661 686.5H665M661 678.5H665M661 670.5H665M661 662.5H665M661 654.5H665M661 646.5H665M661 638.5H665M661 630.5H665M661 622.5H665M661 614.5H665M661 606.5H665M661 598.5H665M664.5 610V701M668.5 610V701M664 610.5H669M664 700.5H669M664 694.5H669M664 686.5H669M664 678.5H669M664 670.5H669M664 662.5H669M664 654.5H669M664 646.5H669M664 638.5H669M664 630.5H669M664 622.5H669M664 614.5H669M668.5 700V701M672.5 700V701M668 700.5H673M668 700.5H673" stroke="#000080" fill="none" shape-rendering="crispEdges"/><path d="M321.5 533V701M318 533.5H322M318 572.5H322M318 636.5H322M318 700.5H322" stroke="#000080" fill="none" shape-rendering="crispEdges"/><path d="M325 704.5H997M325.5 704V709M421.5 704V709M517.5 704V709M613.5 704V709M708.5 704V709M804.5 704V709M900.5 704V709M996.5 704V709" stroke="#000" fill="none" shape-rendering="crispEdges"/><text x="316.5" y="537" text-anchor="end" class="ax">+13.00</text><text x="316.5" y="576" text-anchor="end" class="ax">+10.00</text><text x="316.5" y="640" text-anchor="end" class="ax">+05.00</text><text x="316.5" y="704" text-anchor="end" class="ax">00.00</text><text x="325" y="719" text-anchor="middle" class="ax">lun 31/01</text><text x="421" y="719" text-anchor="middle" class="ax">mar 01/02</text><text x="517" y="719" text-anchor="middle" class="ax">mer 02/02</text><text x="613" y="719" text-anchor="middle" class="ax">gio 03/02</text><text x="708" y="719" text-anchor="middle" class="ax">ven 04/02</text><text x="804" y="719" text-anchor="middle" class="ax">sab 05/02</text><text x="900" y="719" text-anchor="middle" class="ax">dom 06/02</text><text x="996" y="719" text-anchor="middle" class="ax">lun 07/02</text><text x="660" y="515" text-anchor="middle" class="ttl">Piano terra</text><text x="660.5" y="742" text-anchor="middle" class="wk">6° Week 2005</text><text x="1003.5" y="748" text-anchor="end" class="inf">mer 16/02 ; +6.347</text><text transform="translate(328 530) rotate(-45)" class="unit">kWh</text></svg>
</div>
</body></html>
